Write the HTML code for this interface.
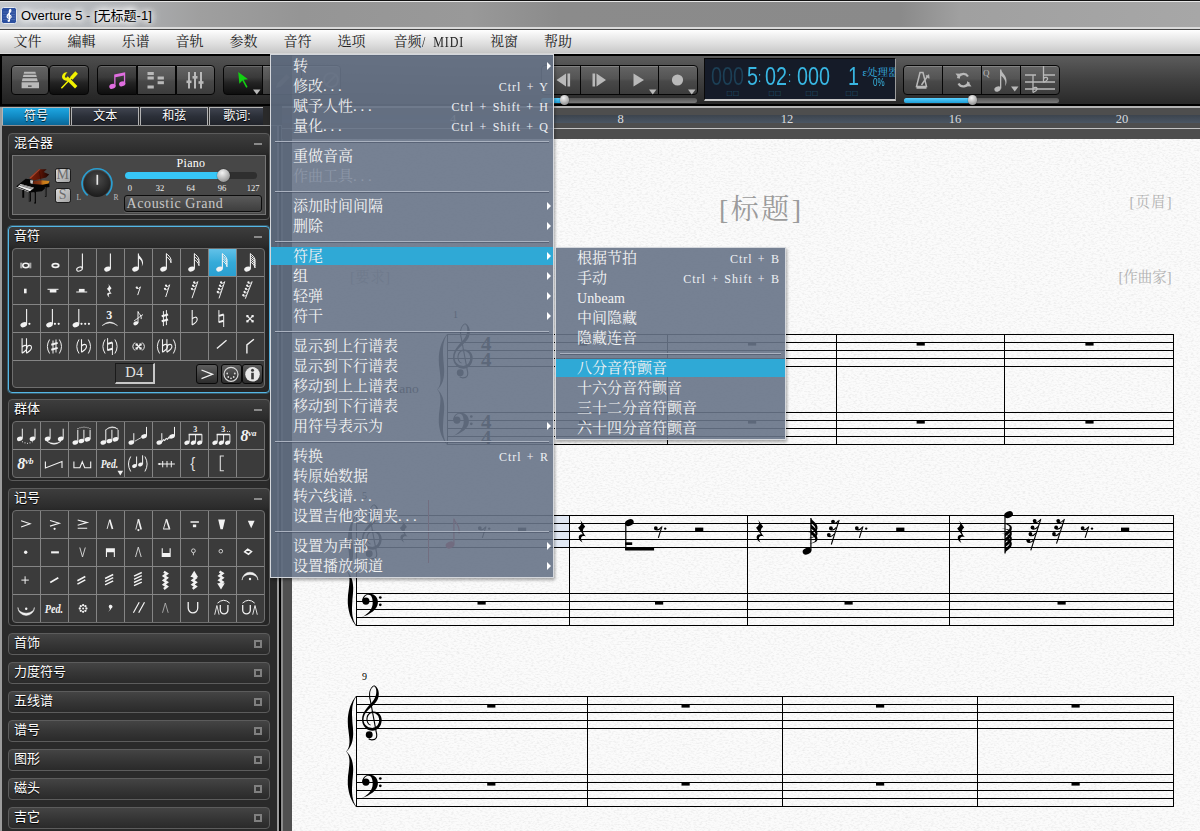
<!DOCTYPE html>
<html lang="zh"><head><meta charset="utf-8"><title>Overture 5</title>
<style>
*{box-sizing:border-box}
html,body{margin:0;padding:0}
body{width:1200px;height:831px;position:relative;overflow:hidden;background:#2b2b2b;
 font-family:"Liberation Sans","Noto Sans CJK SC",sans-serif;font-size:13px;color:#fff}
.abs{position:absolute}
.serif{font-family:"Liberation Serif","Noto Serif CJK SC",serif}
.mono{font-family:"Liberation Mono","Noto Serif CJK SC",monospace}
#title{position:absolute;left:0;top:0;width:1200px;height:30px;
 background:linear-gradient(90deg,#c2c6cb 0,#b3b6ba 100px,#9f9f9f 200px,#959595 300px,#999 470px,#8b8b8b 560px,#8a8a8a 900px,#a0a0a0 960px,#a7a7a7 1200px);}
#title:before{content:"";position:absolute;left:0;top:0;width:1200px;height:30px;
 background:linear-gradient(180deg,#111 0,#111 1px,#e6e6e6 1px,#e6e6e6 2px,rgba(255,255,255,.0) 2.500px,rgba(255,255,255,0) 27px,#dadada 27.500px,#dadada 28.500px,#484848 29px,#484848 30px)}
#title .txt{position:absolute;left:21px;top:7.500px;font-size:13px;line-height:15px;color:#000;white-space:nowrap;
 text-shadow:0 0 6px #fff,0 0 6px #fff,0 0 9px #fff,0 0 12px #fff}
#menubar{position:absolute;left:0;top:30px;width:1200px;height:24px;
 background:linear-gradient(180deg,#ffffff 0,#f0f0f0 25%,#dadada 65%,#c8c8c8 94%,#d8d8d8 96%,#d8d8d8 100%);border-bottom:0}
#menubar>span{position:absolute;top:4px;font-size:14px;line-height:16px;color:#222;white-space:pre}
#toolbar{position:absolute;left:0;top:54px;width:1200px;height:52px;background:#000}
#toolbar .bg{position:absolute;left:2px;top:2px;width:1198px;height:48px;
 background:linear-gradient(90deg,rgba(0,0,0,.2) 0,rgba(0,0,0,0) 450px),linear-gradient(180deg,#5c5c5c 0,#404040 50%,#292929 100%)}
.tbgroup{position:absolute;top:11px;height:30px;border-radius:5px;border:1px solid #0a0a0a;
 background:linear-gradient(180deg,#555 0,#3c3c3c 45%,#262626 55%,#161616 100%);box-shadow:0 1px 0 rgba(255,255,255,.18)}
.tbgroup.light{background:linear-gradient(180deg,#6a6a6a 0,#555 45%,#444 55%,#3a3a3a 100%)}
.tbgroup i{position:absolute;top:0;width:1px;height:28px;background:#0a0a0a;box-shadow:1px 0 0 rgba(255,255,255,.12)}
.btn{position:absolute;top:11px;height:30px;border:1px solid #060606;
 background:linear-gradient(180deg,#4b4b4b 0,#3a3a3a 40%,#232323 60%,#0e0e0e 100%);box-shadow:inset 0 1px 0 rgba(255,255,255,.16)}
.btn.light{background:linear-gradient(180deg,#646464 0,#545454 45%,#484848 55%,#3c3c3c 100%);box-shadow:inset 0 1px 0 rgba(255,255,255,.2)}
.slider{position:absolute;height:5px;border-radius:2.500px;background:linear-gradient(180deg,#555 0,#7a7a7a 100%);top:43.500px}
.slider b{position:absolute;left:0;top:0;height:5px;border-radius:2.500px;background:linear-gradient(180deg,#5ad0ff 0,#1e9fd8 100%)}
.knob{position:absolute;border-radius:50%;background:radial-gradient(circle at 40% 30%,#f4f4f4 0,#bdbdbd 45%,#777 100%);box-shadow:0 0 1px #000}
#lcd{position:absolute;left:704px;top:4px;width:192px;height:43px;background:#151b28;border:1px solid #0a0a0a;border-right-color:#9a9a9a;border-bottom:2px solid #c9c9c9;overflow:hidden}
#lcd span{position:absolute;white-space:nowrap}
#lcd .big{font-size:26px;line-height:26px;top:4px;color:#38b6e2;transform-origin:0 0;transform:scaleX(.76)}
#lcd .dim{color:#1c3f55}
#lcd .sq{font-size:8.500px;line-height:9px;top:30px;color:#24627f;letter-spacing:1.400px}
/* left panel */
#left{position:absolute;left:0;top:106px;width:292px;height:725px;background:#2a2a2a}
.tab{position:absolute;top:.500px;height:18px;width:68px;border:1px solid #b4b4b4;border-bottom:0;text-align:center;font-size:12px;line-height:16px;color:#fff;
 background:linear-gradient(180deg,#3f444f 0,#2b2f38 50%,#20232a 100%);text-shadow:0 1px 1px #000}
.tab.on{background:linear-gradient(180deg,#1ea6e0 0,#1189c2 50%,#0a6798 100%)}
.panel{position:absolute;left:8px;width:262px;border:1px solid #5c5c5c;border-radius:4px;
 background:linear-gradient(180deg,#3d3d3d 0,#2c2c2c 18px,#252525 22px,#252525 100%)}
.panel.sel{border-color:#55b7e6;box-shadow:0 0 0 1px rgba(85,183,230,.35)}
.panel .t{position:absolute;left:5px;top:0px;font-size:13px;line-height:18px;color:#fff;text-shadow:0 1px 1px #000;white-space:nowrap}
.panel .mn{position:absolute;right:7px;top:9px;width:8px;height:2px;background:#8a8a8a}
.panel .sq{position:absolute;right:7px;top:7px;width:8px;height:8px;border:2px solid #7d7d7d}
.cpanel{position:absolute;left:8px;width:262px;height:22px;border:1px solid #5c5c5c;border-radius:4px;
 background:linear-gradient(180deg,#444 0,#363636 50%,#2a2a2a 100%)}
.cpanel .t{position:absolute;left:5px;top:0px;font-size:13px;line-height:18px;color:#fff;text-shadow:0 1px 1px #000;white-space:nowrap}
.cpanel .sq{position:absolute;right:7px;top:6px;width:8px;height:8px;border:2px solid #808080}
.grid{position:absolute;left:3px;width:253px;background:#3b3b3b;border:1px solid #6e6e6e;border-radius:4px;overflow:hidden}
#ruler{position:absolute;left:282px;top:106px;width:918px;height:33px;background:#4e4e4e;border-top:2px solid #b4b4b4;overflow:hidden}
#ruler .band{position:absolute;left:0;top:7px;width:918px;height:7.500px;background:linear-gradient(180deg,#3c444e,#4b5663)}
#ruler .l1{position:absolute;left:0;top:19.500px;width:918px;height:1.500px;background:#c4c4c4}
#ruler span{position:absolute;top:4px;width:40px;text-align:center;font-size:12.500px;line-height:14px;color:#dcdcdc}
#score{position:absolute;left:292px;top:139px;width:908px;height:692px;background:#fbfbfb;overflow:hidden}
.menu{position:absolute;border:1px solid #d4d7dc;background:rgba(103,115,135,.9);box-shadow:1px 2px 3px rgba(0,0,0,.35);overflow:hidden}
.menu .gut{position:absolute;left:0;top:0;width:21px;height:100%;background:rgba(70,80,100,.22)}
.menu .in{position:absolute;left:0;width:100%}
.mi{position:absolute;left:0;width:100%;height:20px;color:#f4f4f4;font-size:15px;line-height:20px;white-space:nowrap}
.mi.hl:before{content:"";position:absolute;left:0;top:1px;width:100%;height:18px;background:#2fa9d6}
.mi.dis{color:#8d97a8}
.mi .lb{position:absolute;top:0}
.mi .sc{position:absolute;top:1px;font-size:12px;letter-spacing:.95px;word-spacing:1.5px;color:#eef0f4}
.mi .ar{position:absolute;right:2px;top:6px;width:0;height:0;border-left:4.500px solid #fff;border-top:4px solid transparent;border-bottom:4px solid transparent}
.mi .dots{letter-spacing:3.700px}
.mi .lat{letter-spacing:.1px;font-size:14px}
.sep{position:absolute;left:4px;right:4px;height:1px;background:#aab2c0;box-shadow:0 1px 0 rgba(60,70,90,.5)}
#menubar .lt{display:inline-block;font-size:15px;line-height:16px;vertical-align:top;transform:scaleX(.8);transform-origin:0 50%;letter-spacing:1.100px;word-spacing:4px}

</style></head>
<body>
<div id="title"><svg class="abs" style="left:.500px;top:6.500px" width="16" height="17" viewBox="0 0 16 17">
<rect x="0.500" y="0.500" width="15" height="16" rx="2" fill="#2b4f9f" stroke="#e4e8ee" stroke-width="1"/>
<path d="M2 5h12M2 7.500h12M2 10h12M2 12.500h12" stroke="#6f8cc8" stroke-width=".6" opacity=".7"/>
<path d="M8.400 14V4c0-1.200.9-2 1.300-1.300.5.900-.3 2.300-1.600 3.500C6.700 7.500 5.900 8.500 6.100 9.700c.2 1.200 1.400 1.800 2.500 1.600 1.300-.2 1.800-1.400 1.300-2.300-.5-.8-1.800-.8-2.200.1" fill="none" stroke="#fff" stroke-width="1.200" stroke-linecap="round"/><circle cx="7.600" cy="13.800" r="1.100" fill="#fff"/></svg><span class="txt">Overture 5 - [无标题-1]</span></div>
<div id="menubar" class="serif"><span style="left:13.5px">文件</span><span style="left:67.5px">編輯</span><span style="left:121.5px">乐谱</span><span style="left:175.5px">音轨</span><span style="left:229.5px">参数</span><span style="left:283.5px">音符</span><span style="left:337.5px">选项</span><span style="left:393.5px">音频<span class="lt">/ MIDI</span></span><span style="left:490px">视窗</span><span style="left:544px">帮助</span></div>
<div id="toolbar"><div class="bg"></div><div class="btn light" style="left:10.5px;width:38.80px;border-radius:4px 4px 4px 4px"></div><div class="btn" style="left:49.3px;width:39.40px;border-radius:4px 4px 4px 4px"></div><div class="btn" style="left:97px;width:40.00px;border-radius:4px 0px 0px 4px"></div><div class="btn light" style="left:136.5px;width:39.50px;border-radius:0px 0px 0px 0px"></div><div class="btn light" style="left:175.5px;width:39.00px;border-radius:0px 4px 4px 0px"></div><div class="btn" style="left:223px;width:39.60px;border-radius:4px 0px 0px 4px"></div><div class="btn light" style="left:262px;width:39.50px;border-radius:0px 0px 0px 0px"></div><div class="btn light" style="left:301px;width:39.50px;border-radius:0px 4px 4px 0px"></div><div class="btn light" style="left:541px;width:39.50px;border-radius:4px 0px 0px 4px"></div><div class="btn light" style="left:580px;width:39.50px;border-radius:0px 0px 0px 0px"></div><div class="btn light" style="left:619px;width:39.50px;border-radius:0px 0px 0px 0px"></div><div class="btn light" style="left:658px;width:39.50px;border-radius:0px 4px 4px 0px"></div><div class="btn light" style="left:903px;width:39.50px;border-radius:4px 0px 0px 4px"></div><div class="btn light" style="left:942px;width:39.50px;border-radius:0px 0px 0px 0px"></div><div class="btn light" style="left:981px;width:39.50px;border-radius:0px 0px 0px 0px"></div><div class="btn light" style="left:1020px;width:39.50px;border-radius:0px 4px 4px 0px"></div><div class="slider" style="left:541px;width:156px"><b style="width:23px"></b></div><div class="knob" style="left:559.5px;top:41px;width:9.500px;height:9.500px"></div><div class="slider" style="left:904px;width:155px"><b style="width:68px"></b></div><div class="knob" style="left:967.5px;top:41px;width:9.500px;height:9.500px"></div><div id="lcd"><span class="big dim" style="left:6px">000</span><span class="big" style="left:41.5px">5</span><span class="big" style="left:53px;font-size:15px;top:4.500px">:</span><span class="big" style="left:59.5px">02</span><span class="big" style="left:83px;font-size:15px;top:4.500px">:</span><span class="big" style="left:92px">000</span><span class="big" style="left:143px">1</span><span class="sq" style="left:22px">□□</span><span class="sq" style="left:64px">□□</span><span class="sq" style="left:101px">□□</span><span class="sq" style="left:141px">□□</span><span class="serif" style="left:157.500px;top:8px;font-size:10.500px;line-height:12px;color:#38b6e2">ε处理器</span><span style="left:167.500px;top:18px;font-size:10px;line-height:12px;color:#38b6e2;transform-origin:0 0;transform:scaleX(.8)">0%</span></div><svg class="abs" style="left:0;top:0" width="1200" height="52" viewBox="0 54 1200 52"><g fill="#b9b9b9"><path d="M24.200 71.800h11.200l.5 2h-12.200z"/><path d="M23.500 74.800h12.600l.7 2.300h-14z"/><path d="M22.600 78.200h14.400l.8 3h-16z"/><path d="M21.600 82.200h17.400v6h-17.400z M28 85.600v1.200h3.600v-1.200z" fill-rule="evenodd"/></g><g stroke="#f2f200" stroke-linecap="butt" fill="none"><path d="M76.600 72.600l-5.400 5.800" stroke-width="3.600"/><path d="M71.400 77.800l-10 10.400" stroke-width="1.500"/><path d="M66.500 77.500l9.700 9.700" stroke-width="3.400"/></g><path d="M67.500 72.400a4.200 4.200 0 1 0 2 6.800l-3.100-.4-1.600-2.300 1.200-2.800z" fill="#f2f200"/><g fill="#e06ee0"><path d="M114.200 74.500l11-2.200v11.900h-1.300v-8.700l-8.400 1.700v9.300h-1.300z"/><ellipse cx="112.400" cy="86.300" rx="3.200" ry="2.400" transform="rotate(-20 112.400 86.300)"/><ellipse cx="122.200" cy="83.800" rx="3.200" ry="2.400" transform="rotate(-20 122.200 83.800)"/></g><g fill="#b9b9b9"><rect x="147.5" y="72" width="6.300" height="3"/><rect x="147.5" y="76.5" width="6.300" height="3"/><rect x="157.6" y="76.5" width="6.300" height="3"/><rect x="157.6" y="81.2" width="6.300" height="3"/><rect x="147.5" y="85.5" width="6.300" height="3"/></g><g fill="#b9b9b9"><rect x="188" y="72" width="2" height="16.500"/><rect x="186.5" y="80.5" width="5" height="2.600"/><rect x="194" y="72" width="2" height="16.500"/><rect x="192.5" y="76" width="5" height="2.600"/><rect x="200" y="72" width="2" height="16.500"/><rect x="198.5" y="81.2" width="5" height="2.600"/></g><path d="M238.200 72l9.800 7.200-4.300.6 3.900 7.200-1.400.8-3.900-7.200-2.900 3.200z" fill="#12d012"/><path d="M253 89.500h7.500l-3.750 5z" fill="#b9b9b9"/><path d="M276 88l1.200-4.500 9.500-9.500 3.300 3.300-9.500 9.500z" fill="#777"/><circle cx="331" cy="80" r="7" fill="none" stroke="#777" stroke-width="2"/><path d="M326 85l10-10" stroke="#777" stroke-width="2"/><g fill="#b9b9b9"><path d="M566 73.500v13l-9.500-6.500z"/><rect x="567.500" y="73.500" width="2.600" height="13"/><rect x="592.500" y="73.500" width="2.600" height="13"/><path d="M596.500 73.500v13l9.500-6.500z"/><path d="M633.500 73.500v13l10.500-6.500z"/><path d="M649 89.500h7.500l-3.750 5z"/><circle cx="677.500" cy="80" r="5.600"/><path d="M688 89.500h7.500l-3.750 5z"/></g><g fill="none" stroke="#b9b9b9" stroke-width="1.500"><path d="M920 72.500h3l3.500 14h-10z"/><path d="M916.500 87.500h10" stroke-width="2.500"/><path d="M921.500 85l6.500-9.500"/><path d="M926 75.500l3 2.500M928.500 74.500l.5 4" stroke-width="1.200"/></g><g fill="none" stroke="#b9b9b9" stroke-width="2.200"><path d="M968 76.500a5.500 5.500 0 0 0-10 1.800"/><path d="M958.500 83.500a5.500 5.500 0 0 0 10.200-1.300"/></g><g fill="#b9b9b9"><path d="M955.500 73.500l5.500.3-1.500 5.200z"/><path d="M971.500 86.500l-5.500-.3 1.500-5.200z"/></g><text x="983" y="76" font-family="Liberation Serif,serif" font-size="9" fill="#b9b9b9">Q</text><g fill="#b9b9b9"><ellipse cx="997.600" cy="89" rx="3.300" ry="2.500" transform="rotate(-25 997.600 89)"/><rect x="1000" y="69.500" width="1.300" height="19"/><path d="M1001 69.500c1 4 6 6 5.500 12.500-.2 2-1 3.500-1.500 4 1.500-5-1-8.500-4.500-10.500z"/><path d="M1011 86.500h7.500l-3.750 5z"/></g><g stroke="#b9b9b9" stroke-width="1.300" fill="none"><path d="M1025 75h11M1044 75h11M1025 82h30M1025 89h30M1033 75v17.500M1043.500 66v16.500"/><path d="M1033 88.500c2-2 4.500-1 4 .8-.4 1.500-2.500 2.500-4 3.200M1043.500 78.500c2-2 4.500-1 4 .8-.4 1.500-2.500 2.500-4 3.200"/></g></svg></div>
<div id="left"><div class="abs" style="left:0;top:1px;width:2px;height:724px;background:#9c9c9c"></div><div class="tab on" style="left:2.00px">符号</div><div class="tab" style="left:71.15px">文本</div><div class="tab" style="left:140.30px">和弦</div><div class="tab" style="left:209.45px;width:54px;border-right:0">歌词:</div><div class="abs" style="left:2px;top:19px;width:290px;height:1px;background:#8c8c8c"></div><div class="abs" style="left:277px;top:20px;width:2px;height:705px;background:#9c9c9c"></div><div class="abs" style="left:279px;top:20px;width:2px;height:705px;background:#000"></div><div class="abs" style="left:281px;top:20px;width:11px;height:705px;background:linear-gradient(90deg,#000 0,#8c8c8c .5px,#8c8c8c 1.500px,#505050 2px)"></div><div class="panel" style="top:27px;height:87px"><span class="t">混合器</span><i class="mn"></i><div class="abs" style="left:3px;top:21px;width:253.500px;height:60px;background:#474747;border:1px solid #757575"></div><svg class="abs" style="left:1px;top:26px" width="50" height="50" viewBox="10 160 50 50">
<defs><linearGradient id="lidg" x1="0" y1="0" x2="1" y2="0"><stop offset="0" stop-color="#7c2008"/><stop offset=".55" stop-color="#5a1405"/><stop offset="1" stop-color="#1c0502"/></linearGradient>
<linearGradient id="sbg" x1="0" y1="0" x2="1" y2="0"><stop offset="0" stop-color="#6a2410"/><stop offset=".45" stop-color="#8a3a12"/><stop offset=".6" stop-color="#c87818"/><stop offset="1" stop-color="#d08a20"/></linearGradient></defs>
<path d="M29.300 178.100L38.900 169.300L46.700 169.300L43.700 172L49.200 174.500L46.100 177.500L34.100 180.600z" fill="url(#lidg)"/>
<path d="M29.300 178.100L38.900 169.300L40.500 169.300L30.800 178.400z" fill="#b8563a" opacity=".7"/>
<path d="M16 186.500L25.700 178.700L29.900 179.300L34.100 180.800L49.200 181.100L49.500 187.100L46.100 187.400L41.900 191.300L29.900 192.500L27.500 191.900z" fill="#050505"/>
<path d="M33.500 181L41.300 180.200L49.500 181.100L48.600 183.400L42.500 184.800L33 184.100z" fill="url(#sbg)"/>
<path d="M30.200 179.900L33.200 180.600L32.600 184L30.400 183.200z" fill="#c8c8c8"/>
<path d="M39.400 171.500L41 180.500" stroke="#2a0a04" stroke-width=".5"/>
<path d="M17.800 186.500L20.800 184.100L34.100 187.700L29.900 191.300z" fill="#f0f0f0"/>
<path d="M19.500 185.200L32.300 189.200M21.500 184.600L33.200 188.200" stroke="#555" stroke-width=".7"/>
<path d="M16.600 186.800L28.800 191.500L29.200 192.600L16.300 187.600z" fill="#bbb"/>
<path d="M22.300 190h1.900v7.700h-1.900zM28.700 192.200h2.200v9.400h-2.200zM34.100 192h1.900v11.400h-1.900zM44.900 186.500h1.600v10.200h-1.600z" fill="#050505"/>
<path d="M29.200 193v8M34.600 192.500v10M45.300 187v9" stroke="#888" stroke-width=".4"/>
</svg><div class="abs serif" style="left:46px;top:33.5px;width:15.500px;height:15px;border-radius:2.500px;border:1px solid #1c1c1c;background:linear-gradient(135deg,#d6d6d6,#a4a4a4);color:#6c6c6c;font-size:14px;line-height:12.500px;text-align:center;transform:scaleX(1)">M</div><div class="abs serif" style="left:46px;top:53.5px;width:15.500px;height:15px;border-radius:2.500px;border:1px solid #1c1c1c;background:linear-gradient(135deg,#d6d6d6,#a4a4a4);color:#6c6c6c;font-size:14px;line-height:12.500px;text-align:center;transform:scaleX(1)">S</div><svg class="abs" style="left:66px;top:31px" width="46" height="40" viewBox="0 0 46 40">
<defs><radialGradient id="kg" cx=".5" cy=".35" r=".7"><stop offset="0" stop-color="#4a4a4a"/><stop offset=".6" stop-color="#2c2c2c"/><stop offset="1" stop-color="#171717"/></radialGradient></defs>
<circle cx="22" cy="18.700" r="13.300" fill="url(#kg)"/>
<path d="M12.700 30.300A14.900 14.900 0 1 1 31.300 30.300" fill="none" stroke="#2a9ed0" stroke-width="1.700"/>
<path d="M22.300 9.800v10" stroke="#e8e8e8" stroke-width="1.700"/>
<text x="1.500" y="35" font-family="Liberation Serif,serif" font-size="7.500" fill="#bbb">L</text>
<text x="38.500" y="35" font-family="Liberation Serif,serif" font-size="7.500" fill="#bbb">R</text>
</svg><span class="abs serif" style="left:152px;top:22px;width:60px;text-align:center;font-size:12px;line-height:14px;color:#fff;letter-spacing:.3px">Piano</span><div class="abs" style="left:115.500px;top:37.500px;width:132px;height:7.500px;border-radius:4px;background:#2f2f2f"></div><div class="abs" style="left:115.500px;top:37.500px;width:100px;height:7.500px;border-radius:4px;background:#37c6f6"></div><div class="knob" style="left:207.500px;top:34.500px;width:13px;height:13px"></div><span class="abs serif" style="left:100.8px;top:48.500px;width:40px;text-align:center;font-size:8.500px;line-height:10px;color:#eee">0</span><span class="abs serif" style="left:130.9px;top:48.500px;width:40px;text-align:center;font-size:8.500px;line-height:10px;color:#eee">32</span><span class="abs serif" style="left:161.7px;top:48.500px;width:40px;text-align:center;font-size:8.500px;line-height:10px;color:#eee">64</span><span class="abs serif" style="left:192.9px;top:48.500px;width:40px;text-align:center;font-size:8.500px;line-height:10px;color:#eee">96</span><span class="abs serif" style="left:224.0px;top:48.500px;width:40px;text-align:center;font-size:8.500px;line-height:10px;color:#eee">127</span><div class="abs serif" style="left:114.500px;top:60.500px;width:138.500px;height:17.500px;border:1px solid #0c0c0c;border-radius:3px;background:linear-gradient(180deg,#5a5a5a,#3e3e3e);color:#c8c8c8;font-size:14px;line-height:15px;padding-left:2px;letter-spacing:.62px;white-space:nowrap;box-shadow:0 1px 0 rgba(255,255,255,.15)">Acoustic Grand</div></div><div class="panel sel" style="top:120px;height:167px"><span class="t">音符</span><i class="mn"></i><div class="grid" style="top:21px;height:140px"><svg class="abs" style="left:0;top:0" width="253" height="140" viewBox="0.5 0.5 253 140"><defs><linearGradient id="selg" x1="0" y1="0" x2="0" y2="1"><stop offset="0" stop-color="#62c1e8"/><stop offset=".5" stop-color="#35abd9"/><stop offset="1" stop-color="#2a9fd0"/></linearGradient></defs><rect x="196.50" y="0.5" width="27.00" height="27.00" fill="url(#selg)"/><path d="M28.00 0V112.00" stroke="#858585" stroke-width="1"/><path d="M56.00 0V112.00" stroke="#858585" stroke-width="1"/><path d="M84.00 0V112.00" stroke="#858585" stroke-width="1"/><path d="M112.00 0V112.00" stroke="#858585" stroke-width="1"/><path d="M140.00 0V112.00" stroke="#858585" stroke-width="1"/><path d="M168.00 0V112.00" stroke="#858585" stroke-width="1"/><path d="M196.00 0V112.00" stroke="#858585" stroke-width="1"/><path d="M224.00 0V112.00" stroke="#858585" stroke-width="1"/><path d="M0 28.00H252.00" stroke="#858585" stroke-width="1"/><path d="M0 56.00H252.00" stroke="#858585" stroke-width="1"/><path d="M0 84.00H252.00" stroke="#858585" stroke-width="1"/><path d="M0 112.00H252.00" stroke="#858585" stroke-width="1"/><g transform="translate(13.3 17)"><ellipse cx="0" cy="0" rx="3" ry="2.200" fill="none" stroke="#f2f2f2" stroke-width="1.600"/><path d="M-5 -2.800v5.600M-4 -2.800v5.600M4 -2.800v5.600M5 -2.800v5.600" stroke="#f2f2f2" stroke-width=".7"/></g><ellipse cx="43.00" cy="17" rx="3.200" ry="1.900" fill="none" stroke="#f2f2f2" stroke-width="1.800"/><ellipse cx="67.00" cy="20.60" rx="2.9" ry="1.9" transform="rotate(-22 67.00 20.60)" fill="none" stroke="#f2f2f2" stroke-width="1.1"/><path d="M69.90 4.90V20.00" stroke="#f2f2f2" stroke-width="1.1" fill="none"/><ellipse cx="95.00" cy="20.60" rx="3.4" ry="2.4" transform="rotate(-22 95.00 20.60)" fill="#f2f2f2"/><path d="M97.90 4.90V20.00" stroke="#f2f2f2" stroke-width="1.1" fill="none"/><ellipse cx="123.00" cy="20.60" rx="3.4" ry="2.4" transform="rotate(-22 123.00 20.60)" fill="#f2f2f2"/><path d="M125.90 4.90V20.00" stroke="#f2f2f2" stroke-width="1.1" fill="none"/><path d="M125.90 4.90c.6 3.600 5.400 5 4.500 10.300-.2 1.200-.7 2.200-1.200 2.800 1.200-4.300-.6-6.700-3.300-8.200z" fill="#f2f2f2"/><ellipse cx="151.00" cy="20.60" rx="3.4" ry="2.4" transform="rotate(-22 151.00 20.60)" fill="#f2f2f2"/><path d="M153.90 4.90V20.00" stroke="#f2f2f2" stroke-width="1.1" fill="none"/><path d="M153.90 5.20c1.600 1.300 4.200 3.100 4.600 6.200" stroke="#f2f2f2" stroke-width="1.000" fill="none"/><path d="M153.90 8.10c1.600 1.300 4.200 3.100 4.600 6.200" stroke="#f2f2f2" stroke-width="1.000" fill="none"/><path d="M158.50 11.10V14.30" stroke="#f2f2f2" stroke-width=".9" fill="none"/><ellipse cx="179.00" cy="20.60" rx="3.4" ry="2.4" transform="rotate(-22 179.00 20.60)" fill="#f2f2f2"/><path d="M181.90 4.90V20.00" stroke="#f2f2f2" stroke-width="1.1" fill="none"/><path d="M181.90 5.20c1.600 1.300 4.200 3.100 4.600 6.200" stroke="#f2f2f2" stroke-width="1.000" fill="none"/><path d="M181.90 8.10c1.600 1.300 4.200 3.100 4.600 6.200" stroke="#f2f2f2" stroke-width="1.000" fill="none"/><path d="M181.90 11.00c1.600 1.300 4.200 3.100 4.600 6.200" stroke="#f2f2f2" stroke-width="1.000" fill="none"/><path d="M186.50 11.10V17.20" stroke="#f2f2f2" stroke-width=".9" fill="none"/><ellipse cx="207.00" cy="20.60" rx="3.4" ry="2.4" transform="rotate(-22 207.00 20.60)" fill="#f2f2f2"/><path d="M209.90 4.90V20.00" stroke="#f2f2f2" stroke-width="1.1" fill="none"/><path d="M209.90 5.20c1.600 1.300 4.200 3.100 4.600 6.200" stroke="#f2f2f2" stroke-width="1.000" fill="none"/><path d="M209.90 7.50c1.600 1.300 4.200 3.100 4.600 6.200" stroke="#f2f2f2" stroke-width="1.000" fill="none"/><path d="M209.90 9.80c1.600 1.300 4.200 3.100 4.600 6.200" stroke="#f2f2f2" stroke-width="1.000" fill="none"/><path d="M209.90 12.10c1.600 1.300 4.200 3.100 4.600 6.200" stroke="#f2f2f2" stroke-width="1.000" fill="none"/><path d="M214.50 11.10V18.30" stroke="#f2f2f2" stroke-width=".9" fill="none"/><ellipse cx="235.00" cy="20.60" rx="3.4" ry="2.4" transform="rotate(-22 235.00 20.60)" fill="#f2f2f2"/><path d="M237.90 4.90V20.00" stroke="#f2f2f2" stroke-width="1.1" fill="none"/><path d="M237.90 5.20c1.600 1.300 4.200 3.100 4.600 6.200" stroke="#f2f2f2" stroke-width="1.000" fill="none"/><path d="M237.90 7.20c1.600 1.300 4.200 3.100 4.600 6.200" stroke="#f2f2f2" stroke-width="1.000" fill="none"/><path d="M237.90 9.20c1.600 1.300 4.200 3.100 4.600 6.200" stroke="#f2f2f2" stroke-width="1.000" fill="none"/><path d="M237.90 11.20c1.600 1.300 4.200 3.100 4.600 6.200" stroke="#f2f2f2" stroke-width="1.000" fill="none"/><path d="M237.90 13.20c1.600 1.300 4.200 3.100 4.600 6.200" stroke="#f2f2f2" stroke-width="1.000" fill="none"/><path d="M242.50 11.10V19.40" stroke="#f2f2f2" stroke-width=".9" fill="none"/><rect x="11.500" y="40.20" width="2.600" height="4.600" fill="#f2f2f2"/><rect x="35.00" y="40.30" width="11" height="1" fill="#f2f2f2"/><rect x="37.30" y="41.00" width="6.600" height="3" fill="#f2f2f2"/><rect x="63.70" y="43.00" width="11" height="1" fill="#f2f2f2"/><rect x="66.40" y="40.40" width="5.700" height="3" fill="#f2f2f2"/><path d="M-1.2 0l2.800 3.600c-1.800 1.600-1.800 2.800.4 5.200-2.400-.8-3.800.6-2 3.200-3-1.800-2.800-4.600.2-4.400l-2.600-3.400c1.800-1.200 2.200-2.400 1.200-4.200z" fill="#f2f2f2" transform="translate(97.20 35.60) scale(1.15 1.12)"/><path d="M125.20 46.60L128.00 38.20" stroke="#f2f2f2" stroke-width="1" fill="none"/><circle cx="124.30" cy="39.10" r="1.15" fill="#f2f2f2"/><path d="M124.30 40.00q2 .6 3.400-1.400" stroke="#f2f2f2" stroke-width=".9" fill="none"/><path d="M153.20 48.50L157.20 36.20" stroke="#f2f2f2" stroke-width="1" fill="none"/><circle cx="153.51" cy="37.10" r="1.15" fill="#f2f2f2"/><path d="M153.51 38.00q2 .6 3.400-1.400" stroke="#f2f2f2" stroke-width=".9" fill="none"/><circle cx="152.47" cy="40.30" r="1.15" fill="#f2f2f2"/><path d="M152.47 41.20q2 .6 3.400-1.400" stroke="#f2f2f2" stroke-width=".9" fill="none"/><path d="M179.50 49.70L185.40 33.00" stroke="#f2f2f2" stroke-width="1" fill="none"/><circle cx="181.68" cy="33.90" r="1.15" fill="#f2f2f2"/><path d="M181.68 34.80q2 .6 3.400-1.400" stroke="#f2f2f2" stroke-width=".9" fill="none"/><circle cx="180.55" cy="37.10" r="1.15" fill="#f2f2f2"/><path d="M180.55 38.00q2 .6 3.400-1.400" stroke="#f2f2f2" stroke-width=".9" fill="none"/><circle cx="179.42" cy="40.30" r="1.15" fill="#f2f2f2"/><path d="M179.42 41.20q2 .6 3.400-1.400" stroke="#f2f2f2" stroke-width=".9" fill="none"/><path d="M206.50 49.90L212.30 33.00" stroke="#f2f2f2" stroke-width="1" fill="none"/><circle cx="208.59" cy="33.90" r="1.15" fill="#f2f2f2"/><path d="M208.59 34.80q2 .6 3.400-1.400" stroke="#f2f2f2" stroke-width=".9" fill="none"/><circle cx="207.49" cy="37.10" r="1.15" fill="#f2f2f2"/><path d="M207.49 38.00q2 .6 3.400-1.400" stroke="#f2f2f2" stroke-width=".9" fill="none"/><circle cx="206.39" cy="40.30" r="1.15" fill="#f2f2f2"/><path d="M206.39 41.20q2 .6 3.400-1.400" stroke="#f2f2f2" stroke-width=".9" fill="none"/><circle cx="205.30" cy="43.50" r="1.15" fill="#f2f2f2"/><path d="M205.30 44.40q2 .6 3.400-1.400" stroke="#f2f2f2" stroke-width=".9" fill="none"/><path d="M232.80 50.20L239.70 33.00" stroke="#f2f2f2" stroke-width="1" fill="none"/><circle cx="235.94" cy="33.90" r="1.15" fill="#f2f2f2"/><path d="M235.94 34.80q2 .6 3.400-1.400" stroke="#f2f2f2" stroke-width=".9" fill="none"/><circle cx="234.66" cy="37.10" r="1.15" fill="#f2f2f2"/><path d="M234.66 38.00q2 .6 3.400-1.400" stroke="#f2f2f2" stroke-width=".9" fill="none"/><circle cx="233.37" cy="40.30" r="1.15" fill="#f2f2f2"/><path d="M233.37 41.20q2 .6 3.400-1.400" stroke="#f2f2f2" stroke-width=".9" fill="none"/><circle cx="232.09" cy="43.50" r="1.15" fill="#f2f2f2"/><path d="M232.09 44.40q2 .6 3.400-1.400" stroke="#f2f2f2" stroke-width=".9" fill="none"/><circle cx="230.80" cy="46.70" r="1.15" fill="#f2f2f2"/><path d="M230.80 47.60q2 .6 3.400-1.400" stroke="#f2f2f2" stroke-width=".9" fill="none"/><ellipse cx="11.20" cy="76.20" rx="3.4" ry="2.4" transform="rotate(-22 11.20 76.20)" fill="#f2f2f2"/><path d="M14.10 60.60V75.60" stroke="#f2f2f2" stroke-width="1.1" fill="none"/><circle cx="16.90" cy="75.30" r="1.1" fill="#f2f2f2"/><ellipse cx="37.00" cy="76.20" rx="3.4" ry="2.4" transform="rotate(-22 37.00 76.20)" fill="#f2f2f2"/><path d="M39.90 60.60V75.60" stroke="#f2f2f2" stroke-width="1.1" fill="none"/><circle cx="42.40" cy="75.30" r="1.1" fill="#f2f2f2"/><circle cx="46.20" cy="75.30" r="1.1" fill="#f2f2f2"/><ellipse cx="63.40" cy="76.20" rx="3.4" ry="2.4" transform="rotate(-22 63.40 76.20)" fill="#f2f2f2"/><path d="M66.30 60.60V75.60" stroke="#f2f2f2" stroke-width="1.1" fill="none"/><circle cx="69.00" cy="75.30" r="1.1" fill="#f2f2f2"/><circle cx="72.70" cy="75.30" r="1.1" fill="#f2f2f2"/><circle cx="76.40" cy="75.30" r="1.1" fill="#f2f2f2"/><text x="96.80" y="70.80" text-anchor="middle" font-family="Liberation Serif,serif" font-weight="bold" font-size="12" fill="#f2f2f2">3</text><path d="M89.50 77.20q7.800-7.600 15.600 0q-7.800-5.600-15.600 0z" fill="#f2f2f2" stroke="#f2f2f2" stroke-width=".4"/><ellipse cx="123.30" cy="74.80" rx="2.6" ry="1.9" transform="rotate(-22 123.30 74.80)" fill="#f2f2f2"/><path d="M125.50 63.00V74.50" stroke="#f2f2f2" stroke-width="1" fill="none"/><path d="M125.50 63.00c.6 2.600 4 3.600 3.200 7.600" stroke="#f2f2f2" stroke-width="1" fill="none"/><path d="M121.50 72.50l9-6.500" stroke="#f2f2f2" stroke-width=".9"/><g stroke="#f2f2f2" fill="none"><path d="M150.90 62.60v15M153.90 61.60v15" stroke-width="1"/><path d="M149.20 67.80l6.400-1.800M149.20 72.80l6.400-1.800" stroke-width="2"/></g><path d="M179.70 61.50V76.50M179.70 76.50c2.600-1.600 5.400-3.800 5-6.200-.4-2.200-3.200-2.200-5 .2" stroke="#f2f2f2" stroke-width="1.100" fill="none"/><g stroke="#f2f2f2" fill="none"><path d="M206.40 61.60v12.500M211.20 66.00v12.500" stroke-width="1"/><path d="M206.40 67.40l4.800-1.400M206.40 73.60l4.800-1.400" stroke-width="2"/></g><path d="M234.90 67.60L240.10 72.80M240.10 67.60L234.90 72.80" stroke="#f2f2f2" stroke-width="1.200" fill="none"/><rect x="233.80" y="66.50" width="2.200" height="2.200" fill="#f2f2f2"/><rect x="233.80" y="71.70" width="2.200" height="2.200" fill="#f2f2f2"/><rect x="239.00" y="66.50" width="2.200" height="2.200" fill="#f2f2f2"/><rect x="239.00" y="71.70" width="2.200" height="2.200" fill="#f2f2f2"/><path d="M9.60 89.70V104.70M9.60 104.70c2.600-1.600 5.400-3.800 5-6.200-.4-2.200-3.200-2.200-5 .2" stroke="#f2f2f2" stroke-width="1.100" fill="none"/><path d="M14.00 89.70V104.70M14.00 104.70c2.600-1.600 5.400-3.800 5-6.200-.4-2.200-3.200-2.200-5 .2" stroke="#f2f2f2" stroke-width="1.100" fill="none"/><path d="M37.10 91.00q-4.400 7.00 0 14M46.80 91.00q4.400 7.00 0 14" stroke="#f2f2f2" stroke-width="1" fill="none"/><g stroke="#f2f2f2" fill="none"><path d="M40.50 92.00v13M43.50 91.00v13" stroke-width="1"/><path d="M38.80 96.20l6.400-1.800M38.80 101.20l6.400-1.800" stroke-width="2"/></g><path d="M66.50 91.00q-4.400 7.00 0 14M75.80 91.00q4.400 7.00 0 14" stroke="#f2f2f2" stroke-width="1" fill="none"/><path d="M69.00 90.70V103.70M69.00 103.70c2.600-1.600 5.400-3.800 5-6.200-.4-2.200-3.200-2.200-5 .2" stroke="#f2f2f2" stroke-width="1.100" fill="none"/><path d="M92.60 91.00q-4.400 7.00 0 14M102.40 91.00q4.400 7.00 0 14" stroke="#f2f2f2" stroke-width="1" fill="none"/><g stroke="#f2f2f2" fill="none"><path d="M95.10 89.60v12.500M99.90 94.00v12.500" stroke-width="1"/><path d="M95.10 95.40l4.800-1.400M95.10 101.60l4.800-1.400" stroke-width="2"/></g><path d="M122.50 94.00q-4.400 4.00 0 8M129.70 94.00q4.400 4.00 0 8" stroke="#f2f2f2" stroke-width="1" fill="none"/><path d="M124.10 96.00L128.10 100.00M128.10 96.00L124.10 100.00" stroke="#f2f2f2" stroke-width="1.200" fill="none"/><rect x="123.00" y="94.90" width="2.200" height="2.200" fill="#f2f2f2"/><rect x="123.00" y="98.90" width="2.200" height="2.200" fill="#f2f2f2"/><rect x="127.00" y="94.90" width="2.200" height="2.200" fill="#f2f2f2"/><rect x="127.00" y="98.90" width="2.200" height="2.200" fill="#f2f2f2"/><path d="M147.10 91.00q-4.400 7.00 0 14M160.80 91.00q4.400 7.00 0 14" stroke="#f2f2f2" stroke-width="1" fill="none"/><path d="M150.00 90.70V103.70M150.00 103.70c2.600-1.600 5.400-3.800 5-6.200-.4-2.200-3.200-2.200-5 .2" stroke="#f2f2f2" stroke-width="1.100" fill="none"/><path d="M154.40 90.70V103.70M154.40 103.70c2.600-1.600 5.400-3.800 5-6.200-.4-2.200-3.200-2.200-5 .2" stroke="#f2f2f2" stroke-width="1.100" fill="none"/><path d="M204.40 100.00l9.600-8.200" stroke="#f2f2f2" stroke-width="1.300"/><path d="M234.40 104.90v-8.500l7-5.700" stroke="#f2f2f2" stroke-width="1.400" fill="none"/></svg><div class="abs serif" style="left:102px;top:114px;width:40px;height:21px;border:1px solid #1a1a1a;border-right:2px solid #c8c8c8;border-bottom:2px solid #c8c8c8;background:#3a3a3a;color:#e4e4e4;font-size:14.500px;line-height:17px;text-align:center;letter-spacing:.5px">D4</div><div class="abs" style="left:183px;top:114.500px;width:22px;height:20.500px;border:1px solid #0a0a0a;border-radius:3px;background:linear-gradient(180deg,#5e5e5e,#444 50%,#2c2c2c)"></div><div class="abs" style="left:207.5px;top:114.500px;width:21.5px;height:20.500px;border:1px solid #0a0a0a;border-radius:3px;background:linear-gradient(180deg,#5e5e5e,#444 50%,#2c2c2c)"></div><div class="abs" style="left:228.5px;top:114.500px;width:21.5px;height:20.500px;border:1px solid #0a0a0a;border-radius:3px;background:linear-gradient(180deg,#5e5e5e,#444 50%,#2c2c2c)"></div><svg class="abs" style="left:183px;top:114.500px" width="70" height="21" viewBox="0 0 70 21">
<path d="M5.500 6l11 4.300-11 4.300" stroke="#f2f2f2" stroke-width="1.300" fill="none"/>
<circle cx="35" cy="10.300" r="7" fill="none" stroke="#d8d8d8" stroke-width="1.200"/>
<circle cx="31.200" cy="9.500" r=".9" fill="#d8d8d8"/><circle cx="38.800" cy="9.500" r=".9" fill="#d8d8d8"/><circle cx="32.300" cy="13" r=".9" fill="#d8d8d8"/><circle cx="37.700" cy="13" r=".9" fill="#d8d8d8"/><circle cx="35" cy="14.300" r=".9" fill="#d8d8d8"/>
<circle cx="56.500" cy="10.300" r="7.300" fill="#e8e8e8"/><rect x="55.200" y="8.800" width="2.600" height="6.500" fill="#3a3a3a"/><circle cx="56.500" cy="6.300" r="1.500" fill="#3a3a3a"/>
</svg></div></div><div class="panel" style="top:293px;height:82px"><span class="t">群体</span><i class="mn"></i><div class="grid" style="top:21px;height:57px"><svg class="abs" style="left:0;top:0" width="253" height="57" viewBox="0.5 0.5 253 57"><path d="M28.00 0V56.00" stroke="#858585" stroke-width="1"/><path d="M56.00 0V56.00" stroke="#858585" stroke-width="1"/><path d="M84.00 0V56.00" stroke="#858585" stroke-width="1"/><path d="M112.00 0V56.00" stroke="#858585" stroke-width="1"/><path d="M140.00 0V56.00" stroke="#858585" stroke-width="1"/><path d="M168.00 0V56.00" stroke="#858585" stroke-width="1"/><path d="M196.00 0V56.00" stroke="#858585" stroke-width="1"/><path d="M224.00 0V56.00" stroke="#858585" stroke-width="1"/><path d="M0 28.00H252.00" stroke="#858585" stroke-width="1"/><ellipse cx="7.30" cy="17.30" rx="2.9" ry="2.1" transform="rotate(-22 7.30 17.30)" fill="#f2f2f2"/><path d="M9.80 7.20V16.90" stroke="#f2f2f2" stroke-width="1" fill="none"/><ellipse cx="20.00" cy="17.30" rx="2.9" ry="2.1" transform="rotate(-22 20.00 17.30)" fill="#f2f2f2"/><path d="M22.50 7.20V16.90" stroke="#f2f2f2" stroke-width="1" fill="none"/><circle cx="10.00" cy="20.20" r="0.55" fill="#f2f2f2"/><circle cx="12.50" cy="21.33" r="0.55" fill="#f2f2f2"/><circle cx="15.00" cy="21.80" r="0.55" fill="#f2f2f2"/><circle cx="17.50" cy="21.33" r="0.55" fill="#f2f2f2"/><circle cx="20.00" cy="20.20" r="0.55" fill="#f2f2f2"/><ellipse cx="35.10" cy="17.30" rx="2.9" ry="2.1" transform="rotate(-22 35.10 17.30)" fill="#f2f2f2"/><path d="M37.60 7.20V16.90" stroke="#f2f2f2" stroke-width="1" fill="none"/><ellipse cx="48.20" cy="17.30" rx="2.9" ry="2.1" transform="rotate(-22 48.20 17.30)" fill="#f2f2f2"/><path d="M50.70 7.20V16.90" stroke="#f2f2f2" stroke-width="1" fill="none"/><path d="M34.50 19.800q7 6 14 0q-7 4-14 0z" fill="#f2f2f2" stroke="#f2f2f2" stroke-width=".5"/><ellipse cx="62.80" cy="21.00" rx="2.9" ry="2.1" transform="rotate(-22 62.80 21.00)" fill="#f2f2f2"/><path d="M65.30 8.30V20.60" stroke="#f2f2f2" stroke-width="1" fill="none"/><ellipse cx="68.90" cy="19.50" rx="2.9" ry="2.1" transform="rotate(-22 68.90 19.50)" fill="#f2f2f2"/><path d="M71.40 8.30V19.10" stroke="#f2f2f2" stroke-width="1" fill="none"/><ellipse cx="75.10" cy="17.80" rx="2.9" ry="2.1" transform="rotate(-22 75.10 17.80)" fill="#f2f2f2"/><path d="M77.60 8.30V17.40" stroke="#f2f2f2" stroke-width="1" fill="none"/><circle cx="65.50" cy="7.00" r="0.55" fill="#f2f2f2"/><circle cx="67.50" cy="6.30" r="0.55" fill="#f2f2f2"/><circle cx="69.50" cy="5.79" r="0.55" fill="#f2f2f2"/><circle cx="71.50" cy="5.60" r="0.55" fill="#f2f2f2"/><circle cx="73.50" cy="5.79" r="0.55" fill="#f2f2f2"/><circle cx="75.50" cy="6.30" r="0.55" fill="#f2f2f2"/><circle cx="77.50" cy="7.00" r="0.55" fill="#f2f2f2"/><ellipse cx="90.80" cy="21.00" rx="2.9" ry="2.1" transform="rotate(-22 90.80 21.00)" fill="#f2f2f2"/><path d="M93.30 8.30V20.60" stroke="#f2f2f2" stroke-width="1" fill="none"/><ellipse cx="96.90" cy="19.50" rx="2.9" ry="2.1" transform="rotate(-22 96.90 19.50)" fill="#f2f2f2"/><path d="M99.40 8.30V19.10" stroke="#f2f2f2" stroke-width="1" fill="none"/><ellipse cx="103.10" cy="17.80" rx="2.9" ry="2.1" transform="rotate(-22 103.10 17.80)" fill="#f2f2f2"/><path d="M105.60 8.30V17.40" stroke="#f2f2f2" stroke-width="1" fill="none"/><path d="M93.00 8.500q6.500-6 12.500-.8q-6-3.600-12.500.8z" fill="#f2f2f2" stroke="#f2f2f2" stroke-width=".5"/><ellipse cx="118.80" cy="21.00" rx="2.9" ry="2.1" transform="rotate(-22 118.80 21.00)" fill="#f2f2f2"/><path d="M121.30 11.70V20.60" stroke="#f2f2f2" stroke-width="1" fill="none"/><ellipse cx="131.50" cy="14.90" rx="2.9" ry="2.1" transform="rotate(-22 131.50 14.90)" fill="#f2f2f2"/><path d="M134.00 5.40V14.50" stroke="#f2f2f2" stroke-width="1" fill="none"/><path d="M122.50 19.600l6.500-3.700" stroke="#f2f2f2" stroke-width=".8"/><ellipse cx="146.80" cy="21.00" rx="2.9" ry="2.1" transform="rotate(-22 146.80 21.00)" fill="#f2f2f2"/><path d="M149.30 11.70V20.60" stroke="#f2f2f2" stroke-width="1" fill="none"/><ellipse cx="159.50" cy="14.90" rx="2.9" ry="2.1" transform="rotate(-22 159.50 14.90)" fill="#f2f2f2"/><path d="M162.00 5.40V14.50" stroke="#f2f2f2" stroke-width="1" fill="none"/><path d="M149.50 20.200l1.500-2 1.200.8 1.500-2 1.200.8 1.500-2 1.200.8" stroke="#f2f2f2" stroke-width="1.100" fill="none"/><ellipse cx="174.40" cy="21.20" rx="2.7" ry="2" transform="rotate(-22 174.40 21.20)" fill="#f2f2f2"/><path d="M176.70 12.80V20.80" stroke="#f2f2f2" stroke-width="1" fill="none"/><ellipse cx="180.80" cy="21.20" rx="2.7" ry="2" transform="rotate(-22 180.80 21.20)" fill="#f2f2f2"/><path d="M183.10 12.80V20.80" stroke="#f2f2f2" stroke-width="1" fill="none"/><ellipse cx="187.10" cy="21.20" rx="2.7" ry="2" transform="rotate(-22 187.10 21.20)" fill="#f2f2f2"/><path d="M189.40 12.80V20.80" stroke="#f2f2f2" stroke-width="1" fill="none"/><path d="M176.20 13h13.200" stroke="#f2f2f2" stroke-width="1.600"/><text x="182.70" y="10.700" text-anchor="middle" font-family="Liberation Serif,serif" font-weight="bold" font-size="8" fill="#f2f2f2">3</text><ellipse cx="202.40" cy="21.20" rx="2.7" ry="2" transform="rotate(-22 202.40 21.20)" fill="#f2f2f2"/><path d="M204.70 12.80V20.80" stroke="#f2f2f2" stroke-width="1" fill="none"/><ellipse cx="208.80" cy="21.20" rx="2.7" ry="2" transform="rotate(-22 208.80 21.20)" fill="#f2f2f2"/><path d="M211.10 12.80V20.80" stroke="#f2f2f2" stroke-width="1" fill="none"/><ellipse cx="215.10" cy="21.20" rx="2.7" ry="2" transform="rotate(-22 215.10 21.20)" fill="#f2f2f2"/><path d="M217.40 12.80V20.80" stroke="#f2f2f2" stroke-width="1" fill="none"/><path d="M204.20 13h13.200" stroke="#f2f2f2" stroke-width="1.600"/><text x="210.70" y="10.700" text-anchor="middle" font-family="Liberation Serif,serif" font-weight="bold" font-size="8" fill="#f2f2f2">3</text><circle cx="215.00" cy="10.00" r="0.5" fill="#f2f2f2"/><circle cx="217.00" cy="10.00" r="0.5" fill="#f2f2f2"/><text x="228.00" y="19.800" font-family="Liberation Serif,serif" font-weight="bold" font-style="italic" font-size="16" fill="#f2f2f2">8</text><text x="235.60" y="14.200" font-family="Liberation Serif,serif" font-weight="bold" font-style="italic" font-size="9" fill="#f2f2f2">va</text><text x="4.800" y="47.50" font-family="Liberation Serif,serif" font-weight="bold" font-style="italic" font-size="16" fill="#f2f2f2">8</text><text x="12.400" y="42.20" font-family="Liberation Serif,serif" font-weight="bold" font-style="italic" font-size="9" fill="#f2f2f2">vb</text><path d="M32.90 40.00v6.500l16.600-6.500v6.500" stroke="#f2f2f2" stroke-width="1.100" fill="none"/><path d="M61.40 40.00v6.300h6l2.400-6 2.400 6h6v-6.300" stroke="#f2f2f2" stroke-width="1.100" fill="none"/><text x="88.20" y="46.30" font-family="Liberation Serif,serif" font-style="italic" font-weight="bold" font-size="12" fill="#f2f2f2" textLength="17.500" lengthAdjust="spacingAndGlyphs">Ped.</text><path d="M105.00 49.30h5.600l-2.800 4.600z" fill="#f2f2f2"/><path d="M118.20 35.00q-4.400 7.50 0 15M132.40 35.00q4.400 7.50 0 15" stroke="#f2f2f2" stroke-width="1" fill="none"/><ellipse cx="122.00" cy="44.50" rx="2.5" ry="1.9" transform="rotate(-22 122.00 44.50)" fill="#f2f2f2"/><path d="M124.10 35.00V44.10" stroke="#f2f2f2" stroke-width="1" fill="none"/><ellipse cx="128.00" cy="43.00" rx="2.5" ry="1.9" transform="rotate(-22 128.00 43.00)" fill="#f2f2f2"/><path d="M130.10 33.80V42.60" stroke="#f2f2f2" stroke-width="1" fill="none"/><path d="M145.40 42.50h17M150.20 39.50v6.300M154.50 39.50v6.300M158.80 39.50v6.300" stroke="#f2f2f2" stroke-width="1" fill="none"/><circle cx="147.00" cy="42.50" r="1" fill="#f2f2f2"/><text x="180.20" y="46.60" text-anchor="middle" font-family="Liberation Sans,sans-serif" font-size="15" fill="#ddd">{</text><path d="M211.40 34.50h-3.600v14.800h3.600" stroke="#ddd" stroke-width="1.100" fill="none"/></svg></div></div><div class="panel" style="top:382px;height:138px"><span class="t">记号</span><i class="mn"></i><div class="grid" style="top:21px;height:113px"><svg class="abs" style="left:0;top:0" width="253" height="113" viewBox="0.5 0.5 253 113"><path d="M28.00 0V112.00" stroke="#858585" stroke-width="1"/><path d="M56.00 0V112.00" stroke="#858585" stroke-width="1"/><path d="M84.00 0V112.00" stroke="#858585" stroke-width="1"/><path d="M112.00 0V112.00" stroke="#858585" stroke-width="1"/><path d="M140.00 0V112.00" stroke="#858585" stroke-width="1"/><path d="M168.00 0V112.00" stroke="#858585" stroke-width="1"/><path d="M196.00 0V112.00" stroke="#858585" stroke-width="1"/><path d="M224.00 0V112.00" stroke="#858585" stroke-width="1"/><path d="M0 28.00H252.00" stroke="#858585" stroke-width="1"/><path d="M0 56.00H252.00" stroke="#858585" stroke-width="1"/><path d="M0 84.00H252.00" stroke="#858585" stroke-width="1"/><path d="M8.600 10.200l9 3.100-9 3.100" stroke="#f2f2f2" stroke-width="1.1" fill="none" /><path d="M37.50 10l9.300 2.800-9.300 2.800" stroke="#f2f2f2" stroke-width="1.1" fill="none" /><circle cx="42.10" cy="18.30" r="1.1" fill="#f2f2f2"/><path d="M65.20 9.500l9.500 2.600-9.500 2.600M65.20 17.800h9.500" stroke="#f2f2f2" stroke-width="1.1" fill="none" /><path d="M94.60 18.400l2.600-9.200" stroke="#f2f2f2" stroke-width="0.9" fill="none" /><path d="M97.20 9.200l2.800 9.200" stroke="#f2f2f2" stroke-width="1.7" fill="none" /><path d="M123.30 19l2.600-10.300" stroke="#f2f2f2" stroke-width="0.9" fill="none" /><path d="M125.90 8.700l2.800 10.300" stroke="#f2f2f2" stroke-width="1.6" fill="none" /><circle cx="125.90" cy="19.60" r="1.1" fill="#f2f2f2"/><path d="M151.00 18.300l2.900-9.600" stroke="#f2f2f2" stroke-width="0.9" fill="none" /><path d="M153.90 8.700l3.100 9.600" stroke="#f2f2f2" stroke-width="1.6" fill="none" /><path d="M150.70 18.500h7" stroke="#f2f2f2" stroke-width="1" fill="none" /><path d="M178.00 11.600h8.400" stroke="#f2f2f2" stroke-width="1.5" fill="none" /><rect x="180.40" y="14" width="3.300" height="2.700" fill="#f2f2f2"/><path d="M205.70 9.100h6.900l-2.300 9.700h-2.300z" fill="#f2f2f2"/><path d="M235.30 10.200h6.800l-3.400 7.600z" fill="#f2f2f2"/><circle cx="13.20" cy="41.80" r="1.7" fill="#f2f2f2"/><rect x="38.60" y="40.80" width="7.800" height="2.100" fill="#f2f2f2"/><path d="M67.30 37.00l2.700 9.500 2.800-9.500" stroke="#ddd" stroke-width="0.9" fill="none" /><path d="M93.40 37.80h9v8.700h-1.100v-4.700h-6.800v4.700h-1.100z" fill="#f2f2f2"/><path d="M123.00 46.50l2.800-9.900 2.900 9.900" stroke="#ddd" stroke-width="0.9" fill="none" /><path d="M149.20 37.80h1.100v4.700h6.800v-4.700h1.100v8.700h-9z" fill="#f2f2f2"/><circle cx="180.90" cy="40.30" r="1.900" fill="none" stroke="#ddd" stroke-width=".9"/><path d="M180.90 42.20v2.600" stroke="#ddd" stroke-width="0.9" fill="none" /><circle cx="208.30" cy="40.70" r="1.800" fill="none" stroke="#ddd" stroke-width=".9"/><path d="M232.20 41.40l3-2.700 3.800 2.300-3 2.700z" fill="none" stroke="#f2f2f2" stroke-width="1.500"/><path d="M8.900 69.60h7.400M12.600 65.80v7.600" stroke="#f2f2f2" stroke-width="1" fill="none" /><path d="M37.70 72.00l8.100-4.800" stroke="#f2f2f2" stroke-width="1.7" fill="none" /><path d="M64.90 70.20l7.900-4.200M64.90 73.60l7.900-4.200" stroke="#f2f2f2" stroke-width="1.6" fill="none" /><path d="M92.60 68.00l8.100-4M92.60 71.20l8.100-4M92.60 74.40l8.100-4" stroke="#f2f2f2" stroke-width="1.5" fill="none" /><path d="M121.50 65.60l7.800-3.600M121.50 68.80l7.800-3.600M121.50 72.00l7.800-3.600M121.50 75.20l7.800-3.600" stroke="#f2f2f2" stroke-width="1.4" fill="none" /><path d="M151.40 61.20l3 1.94l-3 2.37l3 1.94l-3 2.37l3 1.94l-3 2.37l3 1.94l-3 2.37" stroke="#f2f2f2" stroke-width="2.400" fill="none" stroke-linejoin="miter"/><path d="M180.20 65.50l3 1.94l-3 2.37l3 1.94l-3 2.37l3 1.94l-3 2.37" stroke="#f2f2f2" stroke-width="2.400" fill="none" stroke-linejoin="miter"/><path d="M181.70 60.30l3.800 6.200h-7.600z" fill="#f2f2f2"/><path d="M207.00 61.00l3 1.94l-3 2.37l3 1.94l-3 2.37l3 1.94l-3 2.37" stroke="#f2f2f2" stroke-width="2.400" fill="none" stroke-linejoin="miter"/><path d="M208.50 79.00l3.800-6.200h-7.600z" fill="#f2f2f2"/><path d="M229.60 69.60a7.900 7.900 0 0 1 15.800 0a7.900 5.700 0 0 0-15.800 0z" fill="#f2f2f2" stroke="#f2f2f2" stroke-width=".5"/><circle cx="237.50" cy="68.50" r="1.2" fill="#f2f2f2"/><path d="M5.400 97.00a8.250 7.900 0 0 0 16.500 0a8.250 5.700 0 0 1-16.500 0z" fill="#f2f2f2" stroke="#f2f2f2" stroke-width=".5"/><circle cx="13.70" cy="98.20" r="1.2" fill="#f2f2f2"/><text x="32.20" y="102.60" font-family="Liberation Serif,serif" font-style="italic" font-weight="bold" font-size="13" fill="#f2f2f2" textLength="18.500" lengthAdjust="spacingAndGlyphs">Ped.</text><circle cx="73.90" cy="98.00" r="1.15" fill="#f2f2f2"/><circle cx="72.93" cy="100.33" r="1.15" fill="#f2f2f2"/><circle cx="70.60" cy="101.30" r="1.15" fill="#f2f2f2"/><circle cx="68.27" cy="100.33" r="1.15" fill="#f2f2f2"/><circle cx="67.30" cy="98.00" r="1.15" fill="#f2f2f2"/><circle cx="68.27" cy="95.67" r="1.15" fill="#f2f2f2"/><circle cx="70.60" cy="94.70" r="1.15" fill="#f2f2f2"/><circle cx="72.93" cy="95.67" r="1.15" fill="#f2f2f2"/><circle cx="70.60" cy="98.00" r="1" fill="#f2f2f2"/><path d="M97.60 94.30a1.900 1.900 0 1 1 -.2 3.600c.9 0 1.300-.6 1.200-1.300c.3 1.900-.8 3.700-3 4.500c1.600-1.100 2.200-2.400 1.500-3.400a1.900 1.900 0 0 1 .5-3.400z" fill="#f2f2f2"/><path d="M120.90 102.30l5.800-10.500M126.20 102.30l5.800-10.500" stroke="#f2f2f2" stroke-width="1.2" fill="none" /><path d="M150.00 102.30l2.800-9.800 2.900 9.800" stroke="#bbb" stroke-width="0.8" fill="none" /><path d="M175.70 91.40v6.200a4.700 4.700 0 0 0 9.500 0v-6.200" stroke="#f2f2f2" stroke-width="1.3" fill="none" /><path d="M202.20 104.20l2.200-9.200 2.200 9.200" stroke="#f2f2f2" stroke-width="0.9" fill="none" /><path d="M207.80 94.50v5a3.800 3.800 0 0 0 7.600 0v-5" stroke="#f2f2f2" stroke-width="1.3" fill="none" /><path d="M205.00 92.60q6.300-5.600 12.200 0" stroke="#f2f2f2" stroke-width="1" fill="none" /><path d="M230.20 94.50v5a3.800 3.800 0 0 0 7.600 0v-5" stroke="#f2f2f2" stroke-width="1.3" fill="none" /><path d="M240.20 104.20l2.300-9.200 2.300 9.200" stroke="#f2f2f2" stroke-width="0.9" fill="none" /><path d="M230.00 92.60q6.300-5.600 12.200 0" stroke="#f2f2f2" stroke-width="1" fill="none" /></svg></div></div><div class="cpanel" style="top:527.20px"><span class="t">首饰</span><i class="sq"></i></div><div class="cpanel" style="top:556.15px"><span class="t">力度符号</span><i class="sq"></i></div><div class="cpanel" style="top:585.10px"><span class="t">五线谱</span><i class="sq"></i></div><div class="cpanel" style="top:614.05px"><span class="t">谱号</span><i class="sq"></i></div><div class="cpanel" style="top:643.00px"><span class="t">图形</span><i class="sq"></i></div><div class="cpanel" style="top:671.95px"><span class="t">磁头</span><i class="sq"></i></div><div class="cpanel" style="top:700.90px"><span class="t">吉它</span><i class="sq"></i></div></div>
<div id="ruler"><div class="band"></div><div class="l1"></div><div class="l2"></div><span class="serif" style="left:151.0px">4</span><span class="serif" style="left:318.5px">8</span><span class="serif" style="left:485.0px">12</span><span class="serif" style="left:653.0px">16</span><span class="serif" style="left:820.0px">20</span></div>
<div id="score"><svg class="abs" style="left:0;top:0" width="908" height="692" viewBox="292 139 908 692"><defs><filter id="pp" x="0" y="0" width="100%" height="100%"><feTurbulence type="fractalNoise" baseFrequency=".35 .7" numOctaves="2" seed="7" result="n"/><feColorMatrix type="matrix" values="0 0 0 0 0  0 0 0 0 0  0 0 0 0 0  .9 0 0 0 -.38"/></filter></defs><rect x="292" y="138" width="908" height="693" filter="url(#pp)" opacity=".16"/><text x="719" y="218.500" textLength="82" font-family="Liberation Serif,Noto Serif CJK SC,serif" font-size="28" fill="#9b9b9b">[标题]</text><text x="1129.500" y="206.500" textLength="42" font-family="Liberation Serif,Noto Serif CJK SC,serif" font-size="14.500" fill="#b2b2b2">[页眉]</text><text x="1118.500" y="282" textLength="53" font-family="Liberation Serif,Noto Serif CJK SC,serif" font-size="14.500" fill="#b2b2b2">[作曲家]</text><text x="350" y="282" textLength="40" font-family="Liberation Serif,Noto Serif CJK SC,serif" font-size="14.500" fill="#b2b2b2">[要求]</text><text x="388" y="393" font-family="Liberation Serif,serif" font-size="13.500" fill="#000">Piano</text><text x="453" y="318" font-family="Liberation Serif,serif" font-size="10" fill="#000">1</text><text x="362" y="499" font-family="Liberation Serif,serif" font-size="10" fill="#000">5</text><text x="362" y="680" font-family="Liberation Serif,serif" font-size="10" fill="#000">9</text><path d="M447.50 334.50H1173.50" stroke="#000" stroke-width="1"/><path d="M447.50 342.50H1173.50" stroke="#000" stroke-width="1"/><path d="M447.50 350.50H1173.50" stroke="#000" stroke-width="1"/><path d="M447.50 358.50H1173.50" stroke="#000" stroke-width="1"/><path d="M447.50 366.50H1173.50" stroke="#000" stroke-width="1"/><path d="M447.50 412.50H1173.50" stroke="#000" stroke-width="1"/><path d="M447.50 420.50H1173.50" stroke="#000" stroke-width="1"/><path d="M447.50 428.50H1173.50" stroke="#000" stroke-width="1"/><path d="M447.50 436.50H1173.50" stroke="#000" stroke-width="1"/><path d="M447.50 444.50H1173.50" stroke="#000" stroke-width="1"/><path d="M447.50 334.05V444.95" stroke="#000" stroke-width="1"/><path d="M667.50 334.05V444.95" stroke="#000" stroke-width="1"/><path d="M836.50 334.05V444.95" stroke="#000" stroke-width="1"/><path d="M1004.50 334.05V444.95" stroke="#000" stroke-width="1"/><path d="M1173.50 334.05V444.95" stroke="#000" stroke-width="1"/><path d="M446.7 334.3L445.3 336.4L443.9 338.5L442.7 340.9L441.5 343.4L440.6 346.3L439.8 349.4L439.2 352.8L438.8 356.5L438.8 360.6L439.0 364.9L439.5 368.8L439.9 372.2L440.2 375.1L440.4 377.7L440.5 380.0L440.3 382.1L440.0 384.1L439.4 385.9L438.5 387.7L437.2 389.4L437.6 389.6L438.9 388.0L440.2 386.4L441.3 384.6L442.3 382.6L443.0 380.4L443.6 377.9L444.0 375.1L444.2 372.0L444.1 368.4L443.8 364.6L443.4 360.4L443.2 356.5L443.0 353.0L443.0 349.8L443.2 346.8L443.5 344.0L444.1 341.4L444.8 339.0L445.9 336.7L447.1 334.7z" fill="#000"/><path d="M447.1 444.3L445.9 442.3L444.8 440.0L444.1 437.6L443.5 435.0L443.2 432.2L443.0 429.2L443.0 426.0L443.2 422.5L443.4 418.6L443.8 414.4L444.1 410.6L444.2 407.0L444.0 403.9L443.6 401.1L443.0 398.6L442.3 396.4L441.3 394.4L440.2 392.6L438.9 391.0L437.6 389.4L437.2 389.6L438.5 391.3L439.4 393.1L440.0 394.9L440.3 396.9L440.5 399.0L440.4 401.3L440.2 403.9L439.9 406.8L439.5 410.2L439.0 414.1L438.8 418.4L438.8 422.5L439.2 426.2L439.8 429.6L440.6 432.7L441.5 435.6L442.7 438.1L443.9 440.5L445.3 442.6L446.7 444.7z" fill="#000"/><path d="M464.7 323.4L463.1 324.6L461.8 326.2L460.9 328.0L460.3 330.0L460.1 332.1L460.1 334.3L460.3 336.5L460.8 338.6L461.6 342.9L462.4 347.1L463.2 351.4L464.0 355.7L464.8 360.0L465.6 364.2L466.3 368.2L467.1 372.2L467.2 374.0L466.9 375.2L466.3 376.2L465.4 376.8L464.2 377.1L462.9 377.2L461.4 376.9L459.9 376.3L459.5 377.5L461.1 378.1L462.8 378.4L464.4 378.3L465.8 377.9L467.0 377.0L467.9 375.7L468.3 374.0L468.2 372.0L467.4 368.0L466.7 363.9L465.9 359.7L465.1 355.5L464.3 351.2L463.5 346.9L462.7 342.6L461.9 338.4L461.4 336.3L461.1 334.2L461.1 332.1L461.2 330.1L461.7 328.3L462.5 326.6L463.6 325.2L465.1 324.0z" fill="#000"/><path d="M464.7 324.1L465.7 324.7L466.4 325.6L466.9 326.8L467.2 328.1L467.3 329.6L467.2 331.2L466.9 332.9L466.4 334.5L465.8 336.1L464.7 338.0L463.2 339.9L461.4 342.0L459.5 344.1L457.5 346.4L455.7 348.9L454.3 351.5L453.3 354.5L453.0 357.7L453.3 359.9L453.8 361.9L454.6 363.6L455.7 365.1L457.0 366.4L458.5 367.5L460.1 368.2L461.8 368.6L463.5 368.7L465.4 368.4L467.1 367.8L468.6 366.9L469.9 365.7L471.0 364.3L471.8 362.8L472.3 361.1L472.6 359.3L472.7 357.5L472.4 355.7L471.8 354.1L471.0 352.7L469.9 351.6L468.8 350.7L467.5 350.1L466.2 349.7L464.8 349.5L463.4 349.5L462.0 349.8L460.8 350.4L459.8 351.2L458.9 352.2L458.2 353.3L457.8 354.6L457.5 355.9L457.4 357.2L457.6 358.6L457.8 359.6L458.1 360.4L458.4 361.1L458.9 361.8L459.3 362.3L459.8 362.7L460.4 363.0L460.9 363.2L461.5 363.4L461.7 362.6L461.2 362.5L460.7 362.2L460.3 362.0L459.9 361.6L459.6 361.1L459.3 360.6L459.0 360.0L458.8 359.3L458.6 358.4L458.5 357.2L458.6 356.0L458.8 354.9L459.3 353.9L459.8 353.0L460.6 352.2L461.4 351.6L462.4 351.2L463.5 351.0L464.7 351.0L465.8 351.2L466.8 351.7L467.7 352.4L468.5 353.2L469.2 354.1L469.6 355.2L470.0 356.3L470.1 357.6L470.1 359.0L469.9 360.4L469.4 361.6L468.8 362.8L468.1 363.7L467.1 364.6L466.0 365.2L464.8 365.6L463.4 365.9L462.1 365.8L460.8 365.6L459.5 365.2L458.3 364.5L457.1 363.6L456.1 362.5L455.3 361.2L454.8 359.5L454.5 357.7L454.8 354.9L455.8 352.3L457.3 350.1L459.1 348.0L461.2 346.0L463.3 344.1L465.3 342.1L467.1 340.0L468.5 337.7L469.3 335.5L469.7 333.4L469.8 331.3L469.5 329.3L469.0 327.6L468.2 326.1L467.3 324.8L466.3 323.9L465.1 323.3z" fill="#000"/><circle cx="460.24" cy="372.74" r="3.44" fill="#000"/><circle cx="456.90" cy="420.10" r="3.60" fill="#000"/><path d="M453.46 420.90C452.50 415.70 456.50 412.50 460.90 412.66C466.10 412.90 469.30 416.90 468.90 422.10C468.50 428.50 461.30 433.30 452.50 436.34C459.70 432.50 463.70 427.70 463.70 421.70C463.70 416.50 462.10 413.70 459.70 413.70C456.50 413.70 454.50 416.10 454.74 419.70z" fill="#000"/><circle cx="471.30" cy="416.50" r="1.36" fill="#000"/><circle cx="471.30" cy="423.86" r="1.36" fill="#000"/><text x="481.00" y="350.50" font-family="Liberation Serif,serif" font-weight="bold" font-size="21" fill="#000">4</text><text x="481.00" y="366.60" font-family="Liberation Serif,serif" font-weight="bold" font-size="21" fill="#000">4</text><text x="481.00" y="428.50" font-family="Liberation Serif,serif" font-weight="bold" font-size="21" fill="#000">4</text><text x="481.00" y="444.60" font-family="Liberation Serif,serif" font-weight="bold" font-size="21" fill="#000">4</text><rect x="579.00" y="342.00" width="8.200" height="3.600" fill="#000"/><rect x="579.00" y="420.00" width="8.200" height="3.600" fill="#000"/><rect x="748.00" y="342.00" width="8.200" height="3.600" fill="#000"/><rect x="748.00" y="420.00" width="8.200" height="3.600" fill="#000"/><rect x="916.60" y="342.00" width="8.200" height="3.600" fill="#000"/><rect x="916.60" y="420.00" width="8.200" height="3.600" fill="#000"/><rect x="1085.40" y="342.00" width="8.200" height="3.600" fill="#000"/><rect x="1085.40" y="420.00" width="8.200" height="3.600" fill="#000"/><rect x="553" y="515.200" width="16.500" height="32.600" fill="#e1e8f3"/><path d="M356.50 515.50H1173.50" stroke="#000" stroke-width="1"/><path d="M356.50 523.50H1173.50" stroke="#000" stroke-width="1"/><path d="M356.50 531.50H1173.50" stroke="#000" stroke-width="1"/><path d="M356.50 539.50H1173.50" stroke="#000" stroke-width="1"/><path d="M356.50 547.50H1173.50" stroke="#000" stroke-width="1"/><path d="M356.50 593.50H1173.50" stroke="#000" stroke-width="1"/><path d="M356.50 601.50H1173.50" stroke="#000" stroke-width="1"/><path d="M356.50 609.50H1173.50" stroke="#000" stroke-width="1"/><path d="M356.50 617.50H1173.50" stroke="#000" stroke-width="1"/><path d="M356.50 625.50H1173.50" stroke="#000" stroke-width="1"/><path d="M356.50 515.05V625.95" stroke="#000" stroke-width="1"/><path d="M569.50 515.05V625.95" stroke="#000" stroke-width="1"/><path d="M747.50 515.05V625.95" stroke="#000" stroke-width="1"/><path d="M949.50 515.05V625.95" stroke="#000" stroke-width="1"/><path d="M1173.50 515.05V625.95" stroke="#000" stroke-width="1"/><path d="M355.7 515.3L354.3 517.4L352.9 519.5L351.7 521.9L350.5 524.4L349.6 527.3L348.8 530.4L348.2 533.8L347.8 537.5L347.8 541.6L348.0 545.9L348.5 549.8L348.9 553.2L349.2 556.1L349.4 558.7L349.5 561.0L349.3 563.1L349.0 565.1L348.4 566.9L347.5 568.7L346.2 570.4L346.6 570.6L347.9 569.0L349.2 567.4L350.3 565.6L351.3 563.6L352.0 561.4L352.6 558.9L353.0 556.1L353.2 553.0L353.1 549.4L352.8 545.6L352.4 541.4L352.2 537.5L352.0 534.0L352.0 530.8L352.2 527.8L352.5 525.0L353.1 522.4L353.8 520.0L354.9 517.7L356.1 515.7z" fill="#000"/><path d="M356.1 625.3L354.9 623.3L353.8 621.0L353.1 618.6L352.5 616.0L352.2 613.2L352.0 610.2L352.0 607.0L352.2 603.5L352.4 599.6L352.8 595.4L353.1 591.6L353.2 588.0L353.0 584.9L352.6 582.1L352.0 579.6L351.3 577.4L350.3 575.4L349.2 573.6L347.9 572.0L346.6 570.4L346.2 570.6L347.5 572.3L348.4 574.1L349.0 575.9L349.3 577.9L349.5 580.0L349.4 582.3L349.2 584.9L348.9 587.8L348.5 591.2L348.0 595.1L347.8 599.4L347.8 603.5L348.2 607.2L348.8 610.6L349.6 613.7L350.5 616.6L351.7 619.1L352.9 621.5L354.3 623.6L355.7 625.7z" fill="#000"/><path d="M373.7 504.4L372.1 505.6L370.8 507.2L369.9 509.0L369.3 511.0L369.1 513.1L369.1 515.3L369.3 517.5L369.8 519.6L370.6 523.9L371.4 528.1L372.2 532.4L373.0 536.7L373.8 541.0L374.6 545.2L375.3 549.2L376.1 553.2L376.2 555.0L375.9 556.2L375.3 557.2L374.4 557.8L373.2 558.1L371.9 558.2L370.4 557.9L368.9 557.3L368.5 558.5L370.1 559.1L371.8 559.4L373.4 559.3L374.8 558.9L376.0 558.0L376.9 556.7L377.3 555.0L377.2 553.0L376.4 549.0L375.7 544.9L374.9 540.7L374.1 536.5L373.3 532.2L372.5 527.9L371.7 523.6L370.9 519.4L370.4 517.3L370.1 515.2L370.1 513.1L370.2 511.1L370.7 509.3L371.5 507.6L372.6 506.2L374.1 505.0z" fill="#000"/><path d="M373.7 505.1L374.7 505.7L375.4 506.6L375.9 507.8L376.2 509.1L376.3 510.6L376.2 512.2L375.9 513.9L375.4 515.5L374.8 517.1L373.7 519.0L372.2 520.9L370.4 523.0L368.5 525.1L366.5 527.4L364.7 529.9L363.3 532.5L362.3 535.5L362.0 538.7L362.3 540.9L362.8 542.9L363.6 544.6L364.7 546.1L366.0 547.4L367.5 548.5L369.1 549.2L370.8 549.6L372.5 549.7L374.4 549.4L376.1 548.8L377.6 547.9L378.9 546.7L380.0 545.3L380.8 543.8L381.3 542.1L381.6 540.3L381.7 538.5L381.4 536.7L380.8 535.1L380.0 533.7L378.9 532.6L377.8 531.7L376.5 531.1L375.2 530.7L373.8 530.5L372.4 530.5L371.0 530.8L369.8 531.4L368.8 532.2L367.9 533.2L367.2 534.3L366.8 535.6L366.5 536.9L366.4 538.2L366.6 539.6L366.8 540.6L367.1 541.4L367.4 542.1L367.9 542.8L368.3 543.3L368.8 543.7L369.4 544.0L369.9 544.2L370.5 544.4L370.7 543.6L370.2 543.5L369.7 543.2L369.3 543.0L368.9 542.6L368.6 542.1L368.3 541.6L368.0 541.0L367.8 540.3L367.6 539.4L367.5 538.2L367.6 537.0L367.8 535.9L368.3 534.9L368.8 534.0L369.6 533.2L370.4 532.6L371.4 532.2L372.5 532.0L373.7 532.0L374.8 532.2L375.8 532.7L376.7 533.4L377.5 534.2L378.2 535.1L378.6 536.2L379.0 537.3L379.1 538.6L379.1 540.0L378.9 541.4L378.4 542.6L377.8 543.8L377.1 544.7L376.1 545.6L375.0 546.2L373.8 546.6L372.4 546.9L371.1 546.8L369.8 546.6L368.5 546.2L367.3 545.5L366.1 544.6L365.1 543.5L364.3 542.2L363.8 540.5L363.5 538.7L363.8 535.9L364.8 533.3L366.3 531.1L368.1 529.0L370.2 527.0L372.3 525.1L374.3 523.1L376.1 521.0L377.5 518.7L378.3 516.5L378.7 514.4L378.8 512.3L378.5 510.3L378.0 508.6L377.2 507.1L376.3 505.8L375.3 504.9L374.1 504.3z" fill="#000"/><circle cx="369.24" cy="553.74" r="3.44" fill="#000"/><circle cx="365.90" cy="601.10" r="3.60" fill="#000"/><path d="M362.46 601.90C361.50 596.70 365.50 593.50 369.90 593.66C375.10 593.90 378.30 597.90 377.90 603.10C377.50 609.50 370.30 614.30 361.50 617.34C368.70 613.50 372.70 608.70 372.70 602.70C372.70 597.50 371.10 594.70 368.70 594.70C365.50 594.70 363.50 597.10 363.74 600.70z" fill="#000"/><circle cx="380.30" cy="597.50" r="1.36" fill="#000"/><circle cx="380.30" cy="604.86" r="1.36" fill="#000"/><rect x="477.50" y="601.00" width="8.200" height="3.600" fill="#000"/><rect x="655.00" y="601.00" width="8.200" height="3.600" fill="#000"/><rect x="844.50" y="601.00" width="8.200" height="3.600" fill="#000"/><rect x="1057.50" y="601.00" width="8.200" height="3.600" fill="#000"/><path d="M-1.8 0l4.200 5.400c-2.600 2.200-2.600 4.200 .6 7.600-3.400-1.200-5.400.8-2.800 4.800-4.400-2.800-4-6.800.2-6.600l-3.800-5c2.600-1.700 3.200-3.600 1.600-6.200z" fill="#000" transform="translate(404.00 520.00) scale(1.216 1.28)"/><path d="M428.500 500V563" stroke="#d04040" stroke-width="1"/><ellipse cx="450.00" cy="545.00" rx="4.5" ry="3.2" transform="rotate(-24 450.00 545.00)" fill="#c8283c"/><path d="M453.900 544.500V518.500c1 5 7 7 5 15" stroke="#c8283c" stroke-width="1.200" fill="none"/><path d="M486.00 526.30L482.32 537.80" stroke="#000" stroke-width="1.100" fill="none"/><circle cx="479.82" cy="528.10" r="1.900" fill="#000"/><path d="M478.62 529.10q3.600 2.200 6.600-1.800" stroke="#000" stroke-width="1.100" fill="none"/><circle cx="489.20" cy="528.60" r="1.200" fill="#000"/><rect x="518.00" y="527.60" width="8.200" height="3.900" fill="#000"/><path d="M-1.8 0l4.200 5.400c-2.600 2.200-2.600 4.200 .6 7.600-3.400-1.200-5.400.8-2.800 4.800-4.400-2.800-4-6.800.2-6.600l-3.800-5c2.600-1.700 3.200-3.600 1.600-6.200z" fill="#000" transform="translate(582.30 519.80) scale(1.216 1.28)"/><ellipse cx="629.40" cy="522.70" rx="4.5" ry="3.2" transform="rotate(-24 629.40 522.70)" fill="#000"/><path d="M625.800 523.500V550" stroke="#000" stroke-width="1.200"/><rect x="625.200" y="547.200" width="28.900" height="3.300" fill="#000"/><rect x="625.200" y="542.300" width="7" height="2.700" fill="#000"/><path d="M662.00 526.30L658.32 537.80" stroke="#000" stroke-width="1.100" fill="none"/><circle cx="655.82" cy="528.10" r="1.900" fill="#000"/><path d="M654.62 529.10q3.600 2.200 6.600-1.800" stroke="#000" stroke-width="1.100" fill="none"/><circle cx="665.20" cy="528.60" r="1.200" fill="#000"/><rect x="695.10" y="527.60" width="8.200" height="3.900" fill="#000"/><path d="M-1.8 0l4.200 5.400c-2.600 2.200-2.600 4.200 .6 7.600-3.400-1.200-5.400.8-2.800 4.800-4.400-2.800-4-6.800.2-6.600l-3.800-5c2.600-1.700 3.200-3.600 1.600-6.200z" fill="#000" transform="translate(760.20 519.80) scale(1.216 1.28)"/><ellipse cx="807.00" cy="551.20" rx="4.5" ry="3.2" transform="rotate(-24 807.00 551.20)" fill="#000"/><path d="M810.900 550.500V518" stroke="#000" stroke-width="1.200"/><path d="M810.900 518.00c.6 3 7.200 4.600 6.600 10.400c-.3 2.400-2.800 3.600-9.500 4.400c5.600-1.400 7.600-2.800 7.400-4.600c-.4-2.600-2.600-4-4.500-5z" fill="#000"/><path d="M810.900 523.60c.6 3 7.200 4.600 6.600 10.400c-.3 2.400-2.800 3.600-9.500 4.400c5.600-1.400 7.600-2.800 7.400-4.600c-.4-2.600-2.600-4-4.500-5z" fill="#000"/><path d="M810.900 529.20c.6 3 7.200 4.600 6.600 10.400c-.3 2.400-2.800 3.600-9.500 4.400c5.600-1.400 7.600-2.800 7.400-4.600c-.4-2.600-2.600-4-4.500-5z" fill="#000"/><path d="M839.20 519.80L831.30 544.50" stroke="#000" stroke-width="1.100" fill="none"/><circle cx="833.02" cy="521.60" r="1.900" fill="#000"/><path d="M831.82 522.60q3.600 2.200 6.600-1.800" stroke="#000" stroke-width="1.100" fill="none"/><circle cx="830.91" cy="528.20" r="1.900" fill="#000"/><path d="M829.71 529.20q3.600 2.200 6.600-1.800" stroke="#000" stroke-width="1.100" fill="none"/><circle cx="828.80" cy="534.80" r="1.900" fill="#000"/><path d="M827.60 535.80q3.600 2.200 6.600-1.800" stroke="#000" stroke-width="1.100" fill="none"/><path d="M863.00 526.30L859.32 537.80" stroke="#000" stroke-width="1.100" fill="none"/><circle cx="856.82" cy="528.10" r="1.900" fill="#000"/><path d="M855.62 529.10q3.600 2.200 6.600-1.800" stroke="#000" stroke-width="1.100" fill="none"/><circle cx="866.20" cy="528.60" r="1.200" fill="#000"/><rect x="896.20" y="527.60" width="8.200" height="3.900" fill="#000"/><path d="M-1.8 0l4.200 5.400c-2.600 2.200-2.600 4.200 .6 7.600-3.400-1.200-5.400.8-2.800 4.800-4.400-2.800-4-6.800.2-6.600l-3.800-5c2.600-1.700 3.200-3.600 1.600-6.200z" fill="#000" transform="translate(961.30 520.50) scale(1.216 1.28)"/><ellipse cx="1008.60" cy="514.70" rx="4.5" ry="3.2" transform="rotate(-24 1008.60 514.70)" fill="#000"/><path d="M1005 515.500V553.500" stroke="#000" stroke-width="1.200"/><path d="M1005 553.50c.6-3 7.400-4.600 6.800-10.400c-.3-2.400-3-3.600-10.500-4.400c6.400 1.400 8.600 2.800 8.400 4.600c-.4 2.600-2.800 4-4.700 5z" fill="#000"/><path d="M1005 548.30c.6-3 7.400-4.600 6.800-10.400c-.3-2.400-3-3.600-10.500-4.400c6.400 1.400 8.600 2.800 8.400 4.600c-.4 2.600-2.800 4-4.700 5z" fill="#000"/><path d="M1005 543.10c.6-3 7.400-4.600 6.800-10.400c-.3-2.400-3-3.600-10.500-4.400c6.400 1.400 8.600 2.800 8.400 4.600c-.4 2.600-2.800 4-4.700 5z" fill="#000"/><path d="M1005 537.90c.6-3 7.400-4.600 6.800-10.400c-.3-2.400-3-3.600-10.500-4.400c6.400 1.400 8.600 2.800 8.400 4.600c-.4 2.600-2.800 4-4.700 5z" fill="#000"/><path d="M1040.80 519.00L1030.78 550.30" stroke="#000" stroke-width="1.100" fill="none"/><circle cx="1034.62" cy="520.80" r="1.900" fill="#000"/><path d="M1033.42 521.80q3.600 2.200 6.600-1.800" stroke="#000" stroke-width="1.100" fill="none"/><circle cx="1032.51" cy="527.40" r="1.900" fill="#000"/><path d="M1031.31 528.40q3.600 2.200 6.600-1.800" stroke="#000" stroke-width="1.100" fill="none"/><circle cx="1030.40" cy="534.00" r="1.900" fill="#000"/><path d="M1029.20 535.00q3.600 2.200 6.600-1.800" stroke="#000" stroke-width="1.100" fill="none"/><circle cx="1028.29" cy="540.60" r="1.900" fill="#000"/><path d="M1027.09 541.60q3.600 2.200 6.600-1.800" stroke="#000" stroke-width="1.100" fill="none"/><path d="M1064.40 519.00L1056.50 543.70" stroke="#000" stroke-width="1.100" fill="none"/><circle cx="1058.22" cy="520.80" r="1.900" fill="#000"/><path d="M1057.02 521.80q3.600 2.200 6.600-1.800" stroke="#000" stroke-width="1.100" fill="none"/><circle cx="1056.11" cy="527.40" r="1.900" fill="#000"/><path d="M1054.91 528.40q3.600 2.200 6.600-1.800" stroke="#000" stroke-width="1.100" fill="none"/><circle cx="1054.00" cy="534.00" r="1.900" fill="#000"/><path d="M1052.80 535.00q3.600 2.200 6.600-1.800" stroke="#000" stroke-width="1.100" fill="none"/><path d="M1088.80 526.30L1085.12 537.80" stroke="#000" stroke-width="1.100" fill="none"/><circle cx="1082.62" cy="528.10" r="1.900" fill="#000"/><path d="M1081.42 529.10q3.600 2.200 6.600-1.800" stroke="#000" stroke-width="1.100" fill="none"/><circle cx="1092.00" cy="528.60" r="1.200" fill="#000"/><rect x="1121.00" y="527.60" width="8.200" height="3.900" fill="#000"/><path d="M356.50 696.50H1173.50" stroke="#000" stroke-width="1"/><path d="M356.50 704.50H1173.50" stroke="#000" stroke-width="1"/><path d="M356.50 712.50H1173.50" stroke="#000" stroke-width="1"/><path d="M356.50 720.50H1173.50" stroke="#000" stroke-width="1"/><path d="M356.50 728.50H1173.50" stroke="#000" stroke-width="1"/><path d="M356.50 774.50H1173.50" stroke="#000" stroke-width="1"/><path d="M356.50 782.50H1173.50" stroke="#000" stroke-width="1"/><path d="M356.50 790.50H1173.50" stroke="#000" stroke-width="1"/><path d="M356.50 798.50H1173.50" stroke="#000" stroke-width="1"/><path d="M356.50 806.50H1173.50" stroke="#000" stroke-width="1"/><path d="M356.50 696.05V806.95" stroke="#000" stroke-width="1"/><path d="M587.50 696.05V806.95" stroke="#000" stroke-width="1"/><path d="M782.50 696.05V806.95" stroke="#000" stroke-width="1"/><path d="M977.50 696.05V806.95" stroke="#000" stroke-width="1"/><path d="M1173.50 696.05V806.95" stroke="#000" stroke-width="1"/><path d="M355.7 696.3L354.3 698.4L352.9 700.5L351.7 702.9L350.5 705.4L349.6 708.3L348.8 711.4L348.2 714.8L347.8 718.5L347.8 722.6L348.0 726.9L348.5 730.8L348.9 734.2L349.2 737.1L349.4 739.7L349.5 742.0L349.3 744.1L349.0 746.1L348.4 747.9L347.5 749.7L346.2 751.4L346.6 751.6L347.9 750.0L349.2 748.4L350.3 746.6L351.3 744.6L352.0 742.4L352.6 739.9L353.0 737.1L353.2 734.0L353.1 730.4L352.8 726.6L352.4 722.4L352.2 718.5L352.0 715.0L352.0 711.8L352.2 708.8L352.5 706.0L353.1 703.4L353.8 701.0L354.9 698.7L356.1 696.7z" fill="#000"/><path d="M356.1 806.3L354.9 804.3L353.8 802.0L353.1 799.6L352.5 797.0L352.2 794.2L352.0 791.2L352.0 788.0L352.2 784.5L352.4 780.6L352.8 776.4L353.1 772.6L353.2 769.0L353.0 765.9L352.6 763.1L352.0 760.6L351.3 758.4L350.3 756.4L349.2 754.6L347.9 753.0L346.6 751.4L346.2 751.6L347.5 753.3L348.4 755.1L349.0 756.9L349.3 758.9L349.5 761.0L349.4 763.3L349.2 765.9L348.9 768.8L348.5 772.2L348.0 776.1L347.8 780.4L347.8 784.5L348.2 788.2L348.8 791.6L349.6 794.7L350.5 797.6L351.7 800.1L352.9 802.5L354.3 804.6L355.7 806.7z" fill="#000"/><path d="M373.7 685.4L372.1 686.6L370.8 688.2L369.9 690.0L369.3 692.0L369.1 694.1L369.1 696.3L369.3 698.5L369.8 700.6L370.6 704.9L371.4 709.1L372.2 713.4L373.0 717.7L373.8 722.0L374.6 726.2L375.3 730.2L376.1 734.2L376.2 736.0L375.9 737.2L375.3 738.2L374.4 738.8L373.2 739.1L371.9 739.2L370.4 738.9L368.9 738.3L368.5 739.5L370.1 740.1L371.8 740.4L373.4 740.3L374.8 739.9L376.0 739.0L376.9 737.7L377.3 736.0L377.2 734.0L376.4 730.0L375.7 725.9L374.9 721.7L374.1 717.5L373.3 713.2L372.5 708.9L371.7 704.6L370.9 700.4L370.4 698.3L370.1 696.2L370.1 694.1L370.2 692.1L370.7 690.3L371.5 688.6L372.6 687.2L374.1 686.0z" fill="#000"/><path d="M373.7 686.1L374.7 686.7L375.4 687.6L375.9 688.8L376.2 690.1L376.3 691.6L376.2 693.2L375.9 694.9L375.4 696.5L374.8 698.1L373.7 700.0L372.2 701.9L370.4 704.0L368.5 706.1L366.5 708.4L364.7 710.9L363.3 713.5L362.3 716.5L362.0 719.7L362.3 721.9L362.8 723.9L363.6 725.6L364.7 727.1L366.0 728.4L367.5 729.5L369.1 730.2L370.8 730.6L372.5 730.7L374.4 730.4L376.1 729.8L377.6 728.9L378.9 727.7L380.0 726.3L380.8 724.8L381.3 723.1L381.6 721.3L381.7 719.5L381.4 717.7L380.8 716.1L380.0 714.7L378.9 713.6L377.8 712.7L376.5 712.1L375.2 711.7L373.8 711.5L372.4 711.5L371.0 711.8L369.8 712.4L368.8 713.2L367.9 714.2L367.2 715.3L366.8 716.6L366.5 717.9L366.4 719.2L366.6 720.6L366.8 721.6L367.1 722.4L367.4 723.1L367.9 723.8L368.3 724.3L368.8 724.7L369.4 725.0L369.9 725.2L370.5 725.4L370.7 724.6L370.2 724.5L369.7 724.2L369.3 724.0L368.9 723.6L368.6 723.1L368.3 722.6L368.0 722.0L367.8 721.3L367.6 720.4L367.5 719.2L367.6 718.0L367.8 716.9L368.3 715.9L368.8 715.0L369.6 714.2L370.4 713.6L371.4 713.2L372.5 713.0L373.7 713.0L374.8 713.2L375.8 713.7L376.7 714.4L377.5 715.2L378.2 716.1L378.6 717.2L379.0 718.3L379.1 719.6L379.1 721.0L378.9 722.4L378.4 723.6L377.8 724.8L377.1 725.7L376.1 726.6L375.0 727.2L373.8 727.6L372.4 727.9L371.1 727.8L369.8 727.6L368.5 727.2L367.3 726.5L366.1 725.6L365.1 724.5L364.3 723.2L363.8 721.5L363.5 719.7L363.8 716.9L364.8 714.3L366.3 712.1L368.1 710.0L370.2 708.0L372.3 706.1L374.3 704.1L376.1 702.0L377.5 699.7L378.3 697.5L378.7 695.4L378.8 693.3L378.5 691.3L378.0 689.6L377.2 688.1L376.3 686.8L375.3 685.9L374.1 685.3z" fill="#000"/><circle cx="369.24" cy="734.74" r="3.44" fill="#000"/><circle cx="365.90" cy="782.10" r="3.60" fill="#000"/><path d="M362.46 782.90C361.50 777.70 365.50 774.50 369.90 774.66C375.10 774.90 378.30 778.90 377.90 784.10C377.50 790.50 370.30 795.30 361.50 798.34C368.70 794.50 372.70 789.70 372.70 783.70C372.70 778.50 371.10 775.70 368.70 775.70C365.50 775.70 363.50 778.10 363.74 781.70z" fill="#000"/><circle cx="380.30" cy="778.50" r="1.36" fill="#000"/><circle cx="380.30" cy="785.86" r="1.36" fill="#000"/><rect x="487.20" y="704.00" width="8.200" height="3.600" fill="#000"/><rect x="487.20" y="782.00" width="8.200" height="3.600" fill="#000"/><rect x="681.50" y="704.00" width="8.200" height="3.600" fill="#000"/><rect x="681.50" y="782.00" width="8.200" height="3.600" fill="#000"/><rect x="876.00" y="704.00" width="8.200" height="3.600" fill="#000"/><rect x="876.00" y="782.00" width="8.200" height="3.600" fill="#000"/><rect x="1071.50" y="704.00" width="8.200" height="3.600" fill="#000"/><rect x="1071.50" y="782.00" width="8.200" height="3.600" fill="#000"/></svg></div>
<div class="menu serif" id="m1" style="left:270px;top:54px;width:284px;height:524px"><div class="gut"></div><div class="in" style="top:1px"><div class="mi" style="top:0px"><span class="lb" style="left:22px">转</span><i class="ar"></i></div><div class="mi" style="top:20px"><span class="lb" style="left:22px">修改<span class="dots">...</span></span><span class="sc" style="right:4px">Ctrl + Y</span></div><div class="mi" style="top:40px"><span class="lb" style="left:22px">赋予人性<span class="dots">...</span></span><span class="sc" style="right:4px">Ctrl + Shift + H</span></div><div class="mi" style="top:60px"><span class="lb" style="left:22px">量化<span class="dots">...</span></span><span class="sc" style="right:4px">Ctrl + Shift + Q</span></div><div class="sep" style="top:84.5px"></div><div class="mi" style="top:90px"><span class="lb" style="left:22px">重做音高</span></div><div class="mi dis" style="top:110px"><span class="lb" style="left:22px">作曲工具<span class="dots">...</span></span></div><div class="sep" style="top:134.5px"></div><div class="mi" style="top:140px"><span class="lb" style="left:22px">添加时间间隔</span><i class="ar"></i></div><div class="mi" style="top:160px"><span class="lb" style="left:22px">删除</span><i class="ar"></i></div><div class="sep" style="top:184.5px"></div><div class="mi hl" style="top:190px"><span class="lb" style="left:22px">符尾</span><i class="ar"></i></div><div class="mi" style="top:210px"><span class="lb" style="left:22px">组</span><i class="ar"></i></div><div class="mi" style="top:230px"><span class="lb" style="left:22px">轻弹</span><i class="ar"></i></div><div class="mi" style="top:250px"><span class="lb" style="left:22px">符干</span><i class="ar"></i></div><div class="sep" style="top:274.5px"></div><div class="mi" style="top:280px"><span class="lb" style="left:22px">显示到上行谱表</span></div><div class="mi" style="top:300px"><span class="lb" style="left:22px">显示到下行谱表</span></div><div class="mi" style="top:320px"><span class="lb" style="left:22px">移动到上上谱表</span></div><div class="mi" style="top:340px"><span class="lb" style="left:22px">移动到下行谱表</span></div><div class="mi" style="top:360px"><span class="lb" style="left:22px">用符号表示为</span><i class="ar"></i></div><div class="sep" style="top:384.5px"></div><div class="mi" style="top:390px"><span class="lb" style="left:22px">转换</span><span class="sc" style="right:4px">Ctrl + R</span></div><div class="mi" style="top:410px"><span class="lb" style="left:22px">转原始数据</span></div><div class="mi" style="top:430px"><span class="lb" style="left:22px">转六线谱<span class="dots">...</span></span></div><div class="mi" style="top:450px"><span class="lb" style="left:22px">设置吉他变调夹<span class="dots">...</span></span></div><div class="sep" style="top:474.5px"></div><div class="mi" style="top:480px"><span class="lb" style="left:22px">设置为声部</span><i class="ar"></i></div><div class="mi" style="top:500px"><span class="lb" style="left:22px">设置播放频道</span><i class="ar"></i></div></div></div><div class="menu serif" id="m2" style="left:555px;top:247px;width:231px;height:193px"><div class="in" style="top:0"><div class="mi" style="top:0px"><span class="lb" style="left:21px">根据节拍</span><span class="sc" style="right:5px">Ctrl + B</span></div><div class="mi" style="top:20px"><span class="lb" style="left:21px">手动</span><span class="sc" style="right:5px">Ctrl + Shift + B</span></div><div class="mi" style="top:40px"><span class="lb" style="left:21px"><span class="lat">Unbeam</span></span></div><div class="mi" style="top:60px"><span class="lb" style="left:21px">中间隐藏</span></div><div class="mi" style="top:80px"><span class="lb" style="left:21px">隐藏连音</span></div><div class="sep" style="top:104.5px"></div><div class="mi hl" style="top:110px"><span class="lb" style="left:21px">八分音符颤音</span></div><div class="mi" style="top:130px"><span class="lb" style="left:21px">十六分音符颤音</span></div><div class="mi" style="top:150px"><span class="lb" style="left:21px">三十二分音符颤音</span></div><div class="mi" style="top:170px"><span class="lb" style="left:21px">六十四分音符颤音</span></div></div></div>
</body></html>
